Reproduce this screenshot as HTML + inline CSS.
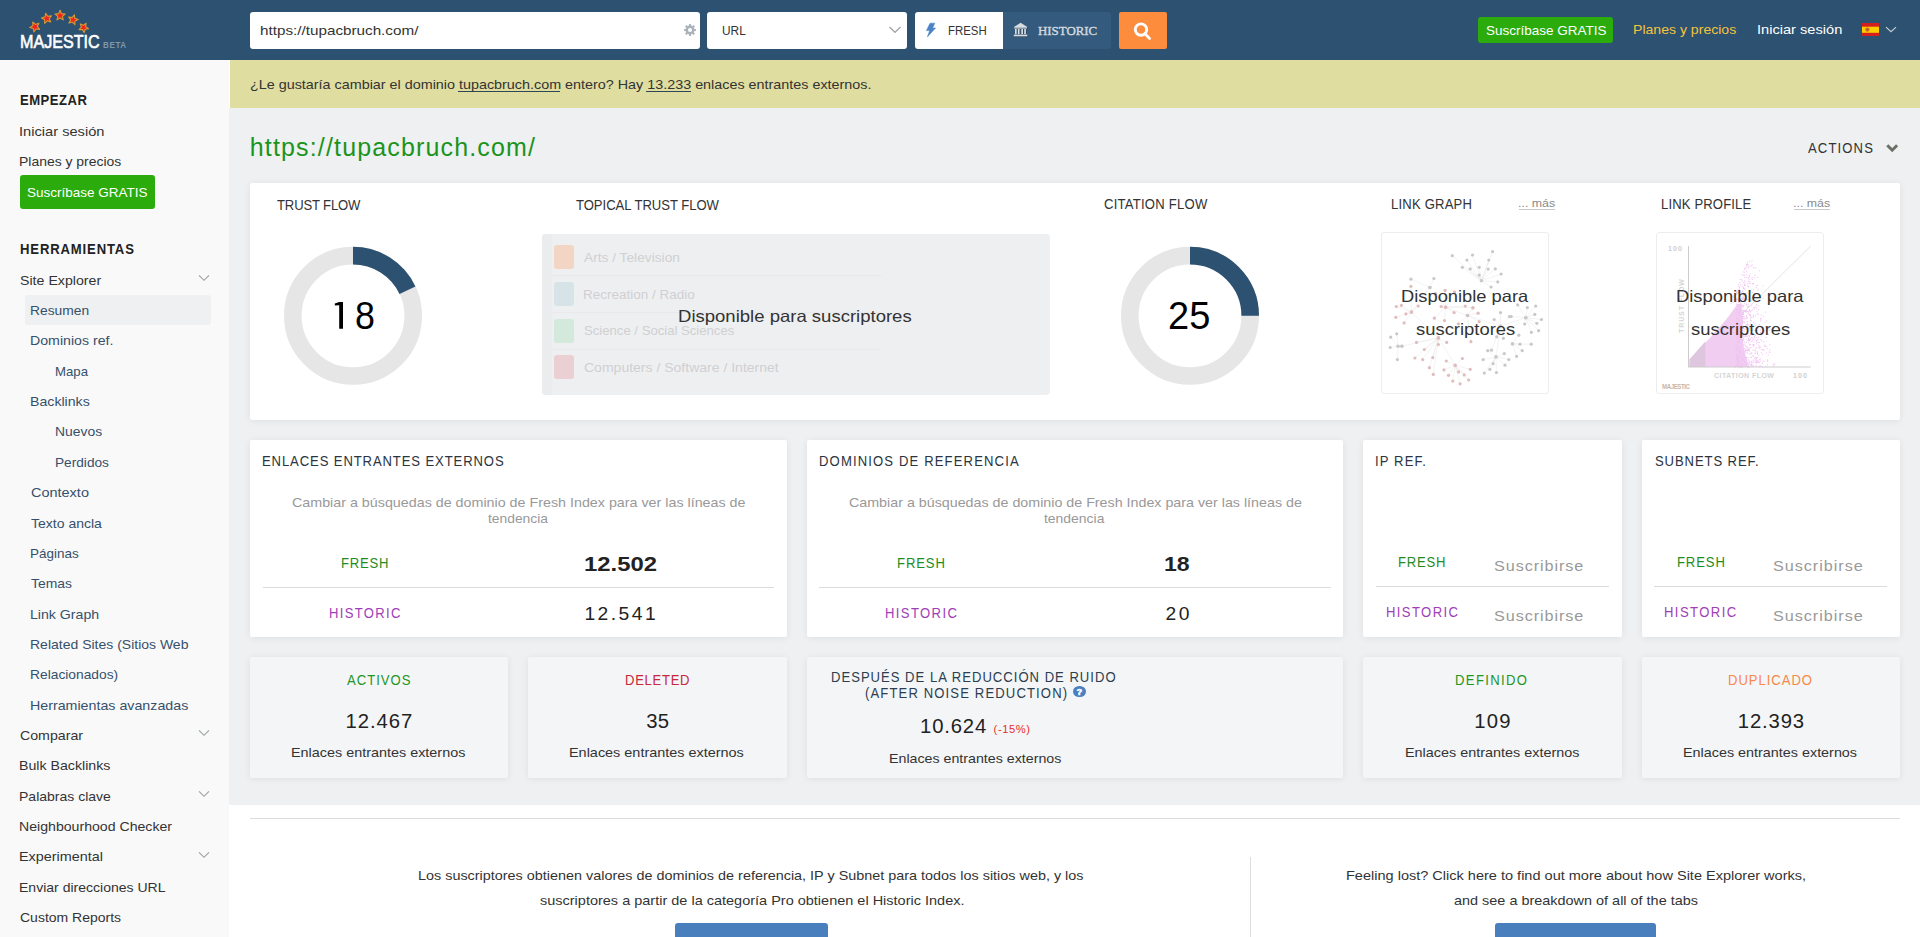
<!DOCTYPE html>
<html><head><meta charset="utf-8"><style>
html,body{margin:0;padding:0;width:1920px;height:937px;overflow:hidden;background:#fff;font-family:"Liberation Sans",sans-serif}
</style></head><body>
<div style="position:absolute;left:0px;top:0px;width:1920px;height:60px;background:#2d5170;"></div>
<div style="position:absolute;left:0px;top:60px;width:229px;height:877px;background:#f9f9f9;"></div>
<div style="position:absolute;left:230px;top:60px;width:1690px;height:48px;background:#dfdda0;"></div>
<div style="position:absolute;left:229px;top:108px;width:1691px;height:697px;background:#eef0f2;"></div>
<div style="position:absolute;left:229px;top:805px;width:1691px;height:132px;background:#ffffff;"></div>
<svg style="position:absolute;left:0;top:0" width="140" height="60"><polygon points="32.76,22.00 35.46,24.46 38.88,23.19 37.37,26.51 39.64,29.37 36.01,28.96 33.99,32.00 33.26,28.43 29.74,27.45 32.91,25.64" fill="#f0241c" stroke="#d69a32" stroke-width="1.1" stroke-linejoin="round"/><polygon points="45.70,13.32 47.77,16.32 51.39,15.85 49.17,18.75 50.74,22.05 47.30,20.83 44.64,23.34 44.73,19.69 41.53,17.95 45.03,16.90" fill="#f0241c" stroke="#d69a32" stroke-width="1.1" stroke-linejoin="round"/><polygon points="60.10,10.30 61.50,13.67 65.14,13.96 62.37,16.34 63.22,19.89 60.10,17.98 56.98,19.89 57.83,16.34 55.06,13.96 58.70,13.67" fill="#f0241c" stroke="#d69a32" stroke-width="1.1" stroke-linejoin="round"/><polygon points="74.35,14.78 74.82,18.33 78.19,19.53 74.96,21.07 74.86,24.65 72.39,22.06 68.96,23.07 70.66,19.92 68.64,16.97 72.16,17.62" fill="#f0241c" stroke="#d69a32" stroke-width="1.1" stroke-linejoin="round"/><polygon points="86.10,23.27 85.66,26.68 88.49,28.64 85.11,29.27 84.12,32.57 82.47,29.55 79.03,29.63 81.40,27.13 80.25,23.88 83.36,25.36" fill="#f0241c" stroke="#d69a32" stroke-width="1.1" stroke-linejoin="round"/></svg>
<div style="position:absolute;left:250px;top:12px;width:450px;height:37px;background:#fff;border-radius:3px"></div>
<svg style="position:absolute;left:680px;top:20px" width="20" height="20"><g fill="#aab3bc"><circle cx="10" cy="10" r="4.4"/><rect x="8.9" y="4.1" width="2.2" height="3" transform="rotate(0 10 10)"/><rect x="8.9" y="4.1" width="2.2" height="3" transform="rotate(45 10 10)"/><rect x="8.9" y="4.1" width="2.2" height="3" transform="rotate(90 10 10)"/><rect x="8.9" y="4.1" width="2.2" height="3" transform="rotate(135 10 10)"/><rect x="8.9" y="4.1" width="2.2" height="3" transform="rotate(180 10 10)"/><rect x="8.9" y="4.1" width="2.2" height="3" transform="rotate(225 10 10)"/><rect x="8.9" y="4.1" width="2.2" height="3" transform="rotate(270 10 10)"/><rect x="8.9" y="4.1" width="2.2" height="3" transform="rotate(315 10 10)"/></g><circle cx="10" cy="10" r="2" fill="#fff"/></svg>
<div style="position:absolute;left:707px;top:12px;width:200px;height:37px;background:#fff;border-radius:3px"></div>
<svg style="position:absolute;left:885px;top:22px" width="20" height="15"><polyline points="4.5,5 10,10.3 15.5,5" fill="none" stroke="#a0a4a8" stroke-width="1.2"/></svg>
<div style="position:absolute;left:915px;top:12px;width:88px;height:37px;background:#fff;border-radius:3px 0 0 3px"></div>
<div style="position:absolute;left:1003px;top:12px;width:108px;height:37px;background:#345a7d;border-radius:0 3px 3px 0"></div>
<svg style="position:absolute;left:922px;top:20px" width="18" height="20"><polygon points="8,3.2 12.8,3.2 10.6,8 13.6,8 5.4,17 7.6,10.6 4.4,10.6" fill="#4a84c6" stroke="#4a84c6" stroke-width="0.5" stroke-linejoin="round"/></svg>
<svg style="position:absolute;left:1010px;top:20px" width="20" height="20"><g fill="#1d3247" transform="translate(0.4,0.6)"><polygon points="10.6,2.8 3.8,7 17.4,7"/><rect x="4.2" y="7.2" width="12.8" height="1.4"/><rect x="5" y="9" width="1.7" height="5.2"/><rect x="7.9" y="9" width="1.7" height="5.2"/><rect x="11.3" y="9" width="1.7" height="5.2"/><rect x="14.2" y="9" width="1.7" height="5.2"/><rect x="3.8" y="14.6" width="13.6" height="1.8"/></g><g fill="#d8dde2"><polygon points="10.6,2.8 3.8,7 17.4,7"/><rect x="4.2" y="7.2" width="12.8" height="1.4"/><rect x="5" y="9" width="1.7" height="5.2"/><rect x="7.9" y="9" width="1.7" height="5.2"/><rect x="11.3" y="9" width="1.7" height="5.2"/><rect x="14.2" y="9" width="1.7" height="5.2"/><rect x="3.8" y="14.6" width="13.6" height="1.8"/></g></svg>
<div style="position:absolute;left:1119px;top:12px;width:48px;height:37px;background:#fd8c3c;border-radius:2px"></div>
<svg style="position:absolute;left:1129px;top:18px" width="28" height="28"><circle cx="12" cy="11.6" r="5.7" fill="none" stroke="#fbfcff" stroke-width="2.9"/><line x1="16" y1="15.8" x2="20.6" y2="20.4" stroke="#fbfcff" stroke-width="2.8" stroke-linecap="round"/></svg>
<div style="position:absolute;left:1478px;top:17px;width:135px;height:26px;background:#2bab0c;border-radius:3px"></div>
<svg style="position:absolute;left:1862px;top:23.2px" width="17" height="13"><rect width="17" height="13" fill="#d41f1f"/><rect y="3.7" width="17" height="6.1" fill="#ffcc00"/><circle cx="5.4" cy="6.6" r="2.1" fill="#b8502a" opacity="0.8"/></svg>
<svg style="position:absolute;left:1883px;top:24px" width="16" height="12"><polyline points="3,3.1 8,7.8 13,3.1" fill="none" stroke="#c5ccd3" stroke-width="1.2"/></svg>
<div style="position:absolute;left:20px;top:175px;width:135px;height:34px;background:#2bab0c;border-radius:3px"></div>
<div style="position:absolute;left:25px;top:295px;width:186px;height:30px;background:#eef0f2;border-radius:3px"></div>
<svg style="position:absolute;left:196px;top:272.3px" width="16" height="12"><polyline points="3,3.3 8,8.3 13,3.3" fill="none" stroke="#9aa0a6" stroke-width="1.1"/></svg>
<svg style="position:absolute;left:196px;top:727.4px" width="16" height="12"><polyline points="3,3.3 8,8.3 13,3.3" fill="none" stroke="#9aa0a6" stroke-width="1.1"/></svg>
<svg style="position:absolute;left:196px;top:788.0px" width="16" height="12"><polyline points="3,3.3 8,8.3 13,3.3" fill="none" stroke="#9aa0a6" stroke-width="1.1"/></svg>
<svg style="position:absolute;left:196px;top:848.7px" width="16" height="12"><polyline points="3,3.3 8,8.3 13,3.3" fill="none" stroke="#9aa0a6" stroke-width="1.1"/></svg>
<svg style="position:absolute;left:1884px;top:140px" width="17" height="15"><polyline points="3.3,5.3 8.2,10.2 13.1,5.3" fill="none" stroke="#6b6f66" stroke-width="3"/></svg>
<div style="position:absolute;left:250px;top:183px;width:1650px;height:237px;background:#fff;box-shadow:0 1px 7px rgba(0,0,0,0.075);border-radius:2px"></div>
<div style="position:absolute;left:1519px;top:209px;width:36.4px;height:1.2px;background:#c8c8c8;"></div>
<div style="position:absolute;left:1794px;top:209px;width:36.4px;height:1.2px;background:#c8c8c8;"></div>
<svg style="position:absolute;left:0;top:0" width="1300" height="420"><circle cx="353" cy="315.8" r="60.2" fill="none" stroke="#e6e6e6" stroke-width="17.6"/><path d="M353,255.60000000000002 A60.2,60.2 0 0 1 407.47,290.17" fill="none" stroke="#2d5170" stroke-width="17.6"/><circle cx="1190" cy="315.8" r="60.2" fill="none" stroke="#e6e6e6" stroke-width="17.6"/><path d="M1190,255.60000000000002 A60.2,60.2 0 0 1 1250.20,315.80" fill="none" stroke="#2d5170" stroke-width="17.6"/></svg>
<svg style="position:absolute;left:330px;top:298px" width="20" height="35"><polygon points="9.2,4 13,4 13,30.8 9.2,30.8 9.2,7.2 4.8,7.6 4.8,5.4" fill="#000"/></svg>
<div style="position:absolute;left:542px;top:234px;width:508px;height:161px;background:#eeeff1;border-radius:4px"></div>
<div style="position:absolute;left:542px;top:234px;width:10px;height:161px;background:#ebecee;border-radius:4px 0 0 4px"></div>
<div style="position:absolute;left:553.6px;top:245.0px;width:20.6px;height:24px;background:#f2d5c3;border-radius:3px"></div>
<div style="position:absolute;left:552px;top:275.3px;width:330px;height:1px;background:#e8e9eb;"></div>
<div style="position:absolute;left:553.6px;top:281.8px;width:20.6px;height:24px;background:#d6e4e8;border-radius:3px"></div>
<div style="position:absolute;left:552px;top:312.1px;width:330px;height:1px;background:#e8e9eb;"></div>
<div style="position:absolute;left:553.6px;top:318.6px;width:20.6px;height:24px;background:#d3e9dc;border-radius:3px"></div>
<div style="position:absolute;left:552px;top:348.9px;width:330px;height:1px;background:#e8e9eb;"></div>
<div style="position:absolute;left:553.6px;top:355.4px;width:20.6px;height:24px;background:#ebd0d3;border-radius:3px"></div>
<div style="position:absolute;left:1381px;top:232px;width:168px;height:162px;background:#fff;border:1px solid #ededed;border-radius:3px;box-sizing:border-box"></div>
<svg style="position:absolute;left:1381px;top:232px" width="168" height="162"><g stroke="#e6e6e6" stroke-width="0.5"><line x1="100.4" y1="48.7" x2="71.3" y2="23.7"/><line x1="100.4" y1="48.7" x2="85.9" y2="28.1"/><line x1="100.4" y1="48.7" x2="91.5" y2="23.0"/><line x1="100.4" y1="48.7" x2="111.6" y2="19.6"/><line x1="100.4" y1="48.7" x2="107.8" y2="28.1"/><line x1="100.4" y1="48.7" x2="81.4" y2="35.3"/><line x1="100.4" y1="48.7" x2="89.2" y2="36.9"/><line x1="100.4" y1="48.7" x2="98.2" y2="35.3"/><line x1="100.4" y1="48.7" x2="107.2" y2="37.1"/><line x1="100.4" y1="48.7" x2="114.3" y2="36.9"/><line x1="100.4" y1="48.7" x2="120.1" y2="42.0"/><line x1="100.4" y1="48.7" x2="116.8" y2="49.9"/><line x1="100.4" y1="48.7" x2="110.1" y2="55.0"/><line x1="100.4" y1="48.7" x2="98.2" y2="43.1"/><line x1="30.5" y1="80.1" x2="15.3" y2="74.5"/><line x1="30.5" y1="80.1" x2="20.4" y2="73.4"/><line x1="30.5" y1="80.1" x2="14.8" y2="85.3"/><line x1="30.5" y1="80.1" x2="23.1" y2="90.9"/><line x1="30.5" y1="80.1" x2="24.9" y2="81.9"/><line x1="30.5" y1="80.1" x2="37.2" y2="74.1"/><line x1="30.5" y1="80.1" x2="48.9" y2="55.5"/><line x1="30.5" y1="80.1" x2="29.9" y2="54.3"/><line x1="48.9" y1="55.5" x2="29.9" y2="47.2"/><line x1="48.9" y1="55.5" x2="52.9" y2="46.5"/><line x1="64.6" y1="75.2" x2="54.5" y2="61.5"/><line x1="64.6" y1="75.2" x2="64.1" y2="58.4"/><line x1="64.6" y1="75.2" x2="73.5" y2="59.9"/><line x1="64.6" y1="75.2" x2="60.1" y2="74.5"/><line x1="64.6" y1="75.2" x2="73.1" y2="80.6"/><line x1="64.6" y1="75.2" x2="53.4" y2="86.2"/><line x1="64.6" y1="75.2" x2="63.5" y2="88.6"/><line x1="64.6" y1="75.2" x2="84.3" y2="74.1"/><line x1="64.6" y1="75.2" x2="91.9" y2="75.6"/><line x1="86.5" y1="83.5" x2="97.1" y2="81.2"/><line x1="86.5" y1="83.5" x2="98.2" y2="89.7"/><line x1="86.5" y1="83.5" x2="91.9" y2="76.1"/><line x1="86.5" y1="83.5" x2="77.4" y2="91.8"/><line x1="86.5" y1="83.5" x2="89.9" y2="109.7"/><line x1="86.5" y1="83.5" x2="64.6" y2="75.2"/><line x1="57.4" y1="105.9" x2="35.5" y2="110.4"/><line x1="57.4" y1="105.9" x2="43.3" y2="117.5"/><line x1="57.4" y1="105.9" x2="33.9" y2="126.0"/><line x1="57.4" y1="105.9" x2="41.7" y2="127.6"/><line x1="57.4" y1="105.9" x2="51.8" y2="125.6"/><line x1="57.4" y1="105.9" x2="48.4" y2="135.7"/><line x1="57.4" y1="105.9" x2="52.3" y2="142.4"/><line x1="57.4" y1="105.9" x2="65.7" y2="110.4"/><line x1="57.4" y1="105.9" x2="57.4" y2="112.6"/><line x1="57.4" y1="105.9" x2="30.5" y2="80.1"/><line x1="57.4" y1="105.9" x2="20.9" y2="114.2"/><line x1="74.2" y1="133.4" x2="65.3" y2="129.0"/><line x1="74.2" y1="133.4" x2="81.4" y2="126.5"/><line x1="74.2" y1="133.4" x2="89.2" y2="137.3"/><line x1="74.2" y1="133.4" x2="63.0" y2="137.9"/><line x1="74.2" y1="133.4" x2="67.5" y2="143.3"/><line x1="74.2" y1="133.4" x2="71.8" y2="149.1"/><line x1="74.2" y1="133.4" x2="79.1" y2="151.8"/><line x1="74.2" y1="133.4" x2="87.7" y2="148.0"/><line x1="74.2" y1="133.4" x2="83.2" y2="142.9"/><line x1="74.2" y1="133.4" x2="77.6" y2="139.9"/><line x1="74.2" y1="133.4" x2="57.4" y2="105.9"/><line x1="17.1" y1="114.2" x2="9.7" y2="105.2"/><line x1="17.1" y1="114.2" x2="15.7" y2="101.8"/><line x1="17.1" y1="114.2" x2="9.2" y2="115.5"/><line x1="17.1" y1="114.2" x2="16.4" y2="127.6"/><line x1="17.1" y1="114.2" x2="20.9" y2="114.2"/><line x1="119.5" y1="94.2" x2="113.2" y2="87.5"/><line x1="119.5" y1="94.2" x2="119.5" y2="80.6"/><line x1="119.5" y1="94.2" x2="128.4" y2="84.6"/><line x1="119.5" y1="94.2" x2="122.4" y2="106.3"/><line x1="119.5" y1="94.2" x2="115.7" y2="104.8"/><line x1="119.5" y1="94.2" x2="110.5" y2="118.2"/><line x1="119.5" y1="94.2" x2="86.5" y2="83.5"/><line x1="119.5" y1="94.2" x2="144.8" y2="85.7"/><line x1="144.8" y1="85.7" x2="136.7" y2="72.9"/><line x1="144.8" y1="85.7" x2="146.4" y2="75.6"/><line x1="144.8" y1="85.7" x2="154.7" y2="74.1"/><line x1="144.8" y1="85.7" x2="153.8" y2="82.4"/><line x1="144.8" y1="85.7" x2="160.5" y2="87.5"/><line x1="144.8" y1="85.7" x2="155.8" y2="91.3"/><line x1="144.8" y1="85.7" x2="157.6" y2="98.7"/><line x1="144.8" y1="85.7" x2="150.4" y2="100.3"/><line x1="144.8" y1="85.7" x2="143.7" y2="92.0"/><line x1="144.8" y1="85.7" x2="130.2" y2="84.6"/><line x1="115.0" y1="124.9" x2="106.7" y2="118.7"/><line x1="115.0" y1="124.9" x2="123.3" y2="121.6"/><line x1="115.0" y1="124.9" x2="127.8" y2="127.6"/><line x1="115.0" y1="124.9" x2="124.0" y2="133.2"/><line x1="115.0" y1="124.9" x2="115.4" y2="140.6"/><line x1="115.0" y1="124.9" x2="108.9" y2="137.3"/><line x1="115.0" y1="124.9" x2="103.3" y2="141.1"/><line x1="115.0" y1="124.9" x2="102.2" y2="127.6"/><line x1="115.0" y1="124.9" x2="112.1" y2="131.7"/><line x1="115.0" y1="124.9" x2="119.5" y2="94.2"/><line x1="131.4" y1="111.9" x2="139.0" y2="112.2"/><line x1="131.4" y1="111.9" x2="141.2" y2="118.7"/><line x1="131.4" y1="111.9" x2="135.6" y2="124.3"/><line x1="131.4" y1="111.9" x2="150.2" y2="112.2"/><line x1="131.4" y1="111.9" x2="137.8" y2="103.2"/></g><circle cx="71.3" cy="23.7" r="1.6" fill="#c8c8c8"/><circle cx="85.9" cy="28.1" r="1.6" fill="#c8c8c8"/><circle cx="91.5" cy="23.0" r="1.6" fill="#c8c8c8"/><circle cx="111.6" cy="19.6" r="1.6" fill="#c8c8c8"/><circle cx="107.8" cy="28.1" r="1.6" fill="#c8c8c8"/><circle cx="81.4" cy="35.3" r="1.6" fill="#c8c8c8"/><circle cx="89.2" cy="36.9" r="1.6" fill="#c8c8c8"/><circle cx="98.2" cy="35.3" r="1.6" fill="#c8c8c8"/><circle cx="107.2" cy="37.1" r="1.6" fill="#c8c8c8"/><circle cx="114.3" cy="36.9" r="1.6" fill="#c8c8c8"/><circle cx="120.1" cy="42.0" r="1.6" fill="#c8c8c8"/><circle cx="116.8" cy="49.9" r="1.6" fill="#c8c8c8"/><circle cx="110.1" cy="55.0" r="1.6" fill="#c8c8c8"/><circle cx="98.2" cy="43.1" r="1.6" fill="#c8c8c8"/><circle cx="100.4" cy="48.7" r="1.8" fill="#c8c8c8"/><circle cx="15.3" cy="74.5" r="1.6" fill="#e0bcbc"/><circle cx="20.4" cy="73.4" r="1.6" fill="#e0bcbc"/><circle cx="14.8" cy="85.3" r="1.6" fill="#e0bcbc"/><circle cx="23.1" cy="90.9" r="1.6" fill="#e0bcbc"/><circle cx="24.9" cy="81.9" r="1.6" fill="#e0bcbc"/><circle cx="37.2" cy="74.1" r="1.6" fill="#e0bcbc"/><circle cx="48.9" cy="55.5" r="1.6" fill="#e0bcbc"/><circle cx="29.9" cy="54.3" r="1.6" fill="#e0bcbc"/><circle cx="30.5" cy="80.1" r="1.8" fill="#e0bcbc"/><circle cx="29.9" cy="47.2" r="1.6" fill="#c8c8c8"/><circle cx="52.9" cy="46.5" r="1.6" fill="#c8c8c8"/><circle cx="48.9" cy="55.5" r="1.8" fill="#c8c8c8"/><circle cx="54.5" cy="61.5" r="1.6" fill="#e0bcbc"/><circle cx="64.1" cy="58.4" r="1.6" fill="#e0bcbc"/><circle cx="73.5" cy="59.9" r="1.6" fill="#e0bcbc"/><circle cx="60.1" cy="74.5" r="1.6" fill="#e0bcbc"/><circle cx="73.1" cy="80.6" r="1.6" fill="#e0bcbc"/><circle cx="53.4" cy="86.2" r="1.6" fill="#e0bcbc"/><circle cx="63.5" cy="88.6" r="1.6" fill="#e0bcbc"/><circle cx="84.3" cy="74.1" r="1.6" fill="#e0bcbc"/><circle cx="91.9" cy="75.6" r="1.6" fill="#e0bcbc"/><circle cx="64.6" cy="75.2" r="1.8" fill="#e0bcbc"/><circle cx="97.1" cy="81.2" r="1.6" fill="#e0bcbc"/><circle cx="98.2" cy="89.7" r="1.6" fill="#e0bcbc"/><circle cx="91.9" cy="76.1" r="1.6" fill="#e0bcbc"/><circle cx="77.4" cy="91.8" r="1.6" fill="#e0bcbc"/><circle cx="89.9" cy="109.7" r="1.6" fill="#e0bcbc"/><circle cx="64.6" cy="75.2" r="1.6" fill="#e0bcbc"/><circle cx="86.5" cy="83.5" r="1.8" fill="#e0bcbc"/><circle cx="35.5" cy="110.4" r="1.6" fill="#e0bcbc"/><circle cx="43.3" cy="117.5" r="1.6" fill="#e0bcbc"/><circle cx="33.9" cy="126.0" r="1.6" fill="#e0bcbc"/><circle cx="41.7" cy="127.6" r="1.6" fill="#e0bcbc"/><circle cx="51.8" cy="125.6" r="1.6" fill="#e0bcbc"/><circle cx="48.4" cy="135.7" r="1.6" fill="#e0bcbc"/><circle cx="52.3" cy="142.4" r="1.6" fill="#e0bcbc"/><circle cx="65.7" cy="110.4" r="1.6" fill="#e0bcbc"/><circle cx="57.4" cy="112.6" r="1.6" fill="#e0bcbc"/><circle cx="30.5" cy="80.1" r="1.6" fill="#e0bcbc"/><circle cx="20.9" cy="114.2" r="1.6" fill="#e0bcbc"/><circle cx="57.4" cy="105.9" r="1.8" fill="#e0bcbc"/><circle cx="65.3" cy="129.0" r="1.6" fill="#e0bcbc"/><circle cx="81.4" cy="126.5" r="1.6" fill="#e0bcbc"/><circle cx="89.2" cy="137.3" r="1.6" fill="#e0bcbc"/><circle cx="63.0" cy="137.9" r="1.6" fill="#e0bcbc"/><circle cx="67.5" cy="143.3" r="1.6" fill="#e0bcbc"/><circle cx="71.8" cy="149.1" r="1.6" fill="#e0bcbc"/><circle cx="79.1" cy="151.8" r="1.6" fill="#e0bcbc"/><circle cx="87.7" cy="148.0" r="1.6" fill="#e0bcbc"/><circle cx="83.2" cy="142.9" r="1.6" fill="#e0bcbc"/><circle cx="77.6" cy="139.9" r="1.6" fill="#e0bcbc"/><circle cx="57.4" cy="105.9" r="1.6" fill="#e0bcbc"/><circle cx="74.2" cy="133.4" r="1.8" fill="#e0bcbc"/><circle cx="9.7" cy="105.2" r="1.6" fill="#c8c8c8"/><circle cx="15.7" cy="101.8" r="1.6" fill="#c8c8c8"/><circle cx="9.2" cy="115.5" r="1.6" fill="#c8c8c8"/><circle cx="16.4" cy="127.6" r="1.6" fill="#c8c8c8"/><circle cx="20.9" cy="114.2" r="1.6" fill="#c8c8c8"/><circle cx="17.1" cy="114.2" r="1.8" fill="#c8c8c8"/><circle cx="113.2" cy="87.5" r="1.6" fill="#c8c8c8"/><circle cx="119.5" cy="80.6" r="1.6" fill="#c8c8c8"/><circle cx="128.4" cy="84.6" r="1.6" fill="#c8c8c8"/><circle cx="122.4" cy="106.3" r="1.6" fill="#c8c8c8"/><circle cx="115.7" cy="104.8" r="1.6" fill="#c8c8c8"/><circle cx="110.5" cy="118.2" r="1.6" fill="#c8c8c8"/><circle cx="86.5" cy="83.5" r="1.6" fill="#c8c8c8"/><circle cx="144.8" cy="85.7" r="1.6" fill="#c8c8c8"/><circle cx="119.5" cy="94.2" r="1.8" fill="#c8c8c8"/><circle cx="136.7" cy="72.9" r="1.6" fill="#c8c8c8"/><circle cx="146.4" cy="75.6" r="1.6" fill="#c8c8c8"/><circle cx="154.7" cy="74.1" r="1.6" fill="#c8c8c8"/><circle cx="153.8" cy="82.4" r="1.6" fill="#c8c8c8"/><circle cx="160.5" cy="87.5" r="1.6" fill="#c8c8c8"/><circle cx="155.8" cy="91.3" r="1.6" fill="#c8c8c8"/><circle cx="157.6" cy="98.7" r="1.6" fill="#c8c8c8"/><circle cx="150.4" cy="100.3" r="1.6" fill="#c8c8c8"/><circle cx="143.7" cy="92.0" r="1.6" fill="#c8c8c8"/><circle cx="130.2" cy="84.6" r="1.6" fill="#c8c8c8"/><circle cx="144.8" cy="85.7" r="1.8" fill="#c8c8c8"/><circle cx="106.7" cy="118.7" r="1.6" fill="#c8c8c8"/><circle cx="123.3" cy="121.6" r="1.6" fill="#c8c8c8"/><circle cx="127.8" cy="127.6" r="1.6" fill="#c8c8c8"/><circle cx="124.0" cy="133.2" r="1.6" fill="#c8c8c8"/><circle cx="115.4" cy="140.6" r="1.6" fill="#c8c8c8"/><circle cx="108.9" cy="137.3" r="1.6" fill="#c8c8c8"/><circle cx="103.3" cy="141.1" r="1.6" fill="#c8c8c8"/><circle cx="102.2" cy="127.6" r="1.6" fill="#c8c8c8"/><circle cx="112.1" cy="131.7" r="1.6" fill="#c8c8c8"/><circle cx="119.5" cy="94.2" r="1.6" fill="#c8c8c8"/><circle cx="115.0" cy="124.9" r="1.8" fill="#c8c8c8"/><circle cx="139.0" cy="112.2" r="1.6" fill="#c8c8c8"/><circle cx="141.2" cy="118.7" r="1.6" fill="#c8c8c8"/><circle cx="135.6" cy="124.3" r="1.6" fill="#c8c8c8"/><circle cx="150.2" cy="112.2" r="1.6" fill="#c8c8c8"/><circle cx="137.8" cy="103.2" r="1.6" fill="#c8c8c8"/><circle cx="131.4" cy="111.9" r="1.8" fill="#c8c8c8"/></svg>
<div style="position:absolute;left:1656px;top:232px;width:168px;height:162px;background:#fff;border:1px solid #ededed;border-radius:3px;box-sizing:border-box"></div>
<svg style="position:absolute;left:1656px;top:232px" width="168" height="162"><line x1="32.5" y1="135.0" x2="154.7" y2="14.0" stroke="#d6d6d6" stroke-width="0.7"/><polygon points="33.5,134.9 33.5,127.5 56.7,103.1 71.4,85.9 81.2,72.5 84.9,71.2 87.3,85.9 86.1,103.1 88.5,120.2 93.4,134.9" fill="#f1cdf1"/><polygon points="33.5,134.9 33.5,127.5 49.4,109.2 49.4,134.9" fill="#dfc6df"/><rect x="102.0" y="112.6" width="1" height="1" fill="#f0c2f0"/><rect x="112.1" y="101.9" width="1" height="1" fill="#f0c2f0"/><rect x="103.3" y="93.5" width="1" height="1" fill="#f0c2f0"/><rect x="79.4" y="58.3" width="1" height="1" fill="#f0c2f0"/><rect x="98.0" y="75.4" width="1" height="1" fill="#f0c2f0"/><rect x="83.6" y="122.5" width="1" height="1" fill="#f0c2f0"/><rect x="80.2" y="91.9" width="1" height="1" fill="#f0c2f0"/><rect x="92.0" y="130.5" width="1" height="1" fill="#f0c2f0"/><rect x="98.9" y="120.5" width="1" height="1" fill="#f0c2f0"/><rect x="100.5" y="72.6" width="1" height="1" fill="#f0c2f0"/><rect x="79.9" y="103.1" width="1" height="1" fill="#f0c2f0"/><rect x="82.3" y="126.0" width="1" height="1" fill="#f0c2f0"/><rect x="91.6" y="33.7" width="1" height="1" fill="#f0c2f0"/><rect x="87.3" y="88.8" width="1" height="1" fill="#f0c2f0"/><rect x="106.0" y="130.9" width="1" height="1" fill="#f0c2f0"/><rect x="84.5" y="134.8" width="1" height="1" fill="#f0c2f0"/><rect x="99.3" y="92.7" width="1" height="1" fill="#f0c2f0"/><rect x="83.5" y="100.2" width="1" height="1" fill="#f0c2f0"/><rect x="84.9" y="98.9" width="1" height="1" fill="#f0c2f0"/><rect x="99.3" y="61.3" width="1" height="1" fill="#f0c2f0"/><rect x="89.8" y="94.6" width="1" height="1" fill="#f0c2f0"/><rect x="92.0" y="35.2" width="1" height="1" fill="#f0c2f0"/><rect x="93.1" y="104.1" width="1" height="1" fill="#f0c2f0"/><rect x="96.7" y="112.3" width="1" height="1" fill="#f0c2f0"/><rect x="82.8" y="105.7" width="1" height="1" fill="#f0c2f0"/><rect x="94.8" y="92.4" width="1" height="1" fill="#f0c2f0"/><rect x="89.1" y="113.5" width="1" height="1" fill="#f0c2f0"/><rect x="94.2" y="101.6" width="1" height="1" fill="#f0c2f0"/><rect x="89.8" y="84.2" width="1" height="1" fill="#f0c2f0"/><rect x="101.0" y="119.5" width="1" height="1" fill="#f0c2f0"/><rect x="78.8" y="134.7" width="1" height="1" fill="#f0c2f0"/><rect x="89.2" y="101.0" width="1" height="1" fill="#f0c2f0"/><rect x="92.1" y="106.8" width="1" height="1" fill="#f0c2f0"/><rect x="81.1" y="125.3" width="1" height="1" fill="#f0c2f0"/><rect x="85.7" y="77.7" width="1" height="1" fill="#f0c2f0"/><rect x="79.6" y="128.9" width="1" height="1" fill="#f0c2f0"/><rect x="85.5" y="98.2" width="1" height="1" fill="#f0c2f0"/><rect x="101.2" y="106.7" width="1" height="1" fill="#f0c2f0"/><rect x="77.5" y="67.6" width="1" height="1" fill="#f0c2f0"/><rect x="80.6" y="124.7" width="1" height="1" fill="#f0c2f0"/><rect x="100.2" y="108.9" width="1" height="1" fill="#f0c2f0"/><rect x="93.4" y="132.0" width="1" height="1" fill="#f0c2f0"/><rect x="92.2" y="49.1" width="1" height="1" fill="#f0c2f0"/><rect x="81.8" y="101.0" width="1" height="1" fill="#f0c2f0"/><rect x="90.4" y="94.3" width="1" height="1" fill="#f0c2f0"/><rect x="97.0" y="35.0" width="1" height="1" fill="#f0c2f0"/><rect x="87.5" y="78.7" width="1" height="1" fill="#f0c2f0"/><rect x="81.0" y="114.4" width="1" height="1" fill="#f0c2f0"/><rect x="103.3" y="133.7" width="1" height="1" fill="#f0c2f0"/><rect x="90.6" y="66.9" width="1" height="1" fill="#f0c2f0"/><rect x="93.8" y="101.0" width="1" height="1" fill="#f0c2f0"/><rect x="86.9" y="66.5" width="1" height="1" fill="#f0c2f0"/><rect x="88.8" y="68.9" width="1" height="1" fill="#f0c2f0"/><rect x="103.2" y="113.8" width="1" height="1" fill="#f0c2f0"/><rect x="97.3" y="112.1" width="1" height="1" fill="#f0c2f0"/><rect x="90.2" y="72.5" width="1" height="1" fill="#f0c2f0"/><rect x="99.4" y="125.1" width="1" height="1" fill="#f0c2f0"/><rect x="82.0" y="133.8" width="1" height="1" fill="#f0c2f0"/><rect x="81.1" y="120.8" width="1" height="1" fill="#f0c2f0"/><rect x="102.4" y="134.1" width="1" height="1" fill="#f0c2f0"/><rect x="81.7" y="104.3" width="1" height="1" fill="#f0c2f0"/><rect x="99.5" y="119.5" width="1" height="1" fill="#f0c2f0"/><rect x="97.1" y="83.8" width="1" height="1" fill="#f0c2f0"/><rect x="86.8" y="101.2" width="1" height="1" fill="#f0c2f0"/><rect x="113.2" y="97.6" width="1" height="1" fill="#f0c2f0"/><rect x="87.7" y="103.6" width="1" height="1" fill="#f0c2f0"/><rect x="98.3" y="76.5" width="1" height="1" fill="#f0c2f0"/><rect x="83.3" y="63.5" width="1" height="1" fill="#f0c2f0"/><rect x="98.2" y="105.1" width="1" height="1" fill="#f0c2f0"/><rect x="104.7" y="103.5" width="1" height="1" fill="#f0c2f0"/><rect x="89.2" y="117.3" width="1" height="1" fill="#f0c2f0"/><rect x="85.2" y="71.6" width="1" height="1" fill="#f0c2f0"/><rect x="85.8" y="97.3" width="1" height="1" fill="#f0c2f0"/><rect x="86.4" y="81.1" width="1" height="1" fill="#f0c2f0"/><rect x="106.8" y="117.2" width="1" height="1" fill="#f0c2f0"/><rect x="80.3" y="89.3" width="1" height="1" fill="#f0c2f0"/><rect x="85.0" y="127.2" width="1" height="1" fill="#f0c2f0"/><rect x="98.8" y="116.6" width="1" height="1" fill="#f0c2f0"/><rect x="97.4" y="35.4" width="1" height="1" fill="#f0c2f0"/><rect x="81.4" y="88.4" width="1" height="1" fill="#f0c2f0"/><rect x="100.2" y="108.2" width="1" height="1" fill="#f0c2f0"/><rect x="91.7" y="81.3" width="1" height="1" fill="#f0c2f0"/><rect x="88.8" y="52.6" width="1" height="1" fill="#f0c2f0"/><rect x="80.2" y="59.4" width="1" height="1" fill="#f0c2f0"/><rect x="86.6" y="90.2" width="1" height="1" fill="#f0c2f0"/><rect x="83.8" y="103.7" width="1" height="1" fill="#f0c2f0"/><rect x="82.2" y="86.2" width="1" height="1" fill="#f0c2f0"/><rect x="117.0" y="133.6" width="1" height="1" fill="#f0c2f0"/><rect x="92.5" y="108.0" width="1" height="1" fill="#f0c2f0"/><rect x="91.0" y="74.7" width="1" height="1" fill="#f0c2f0"/><rect x="97.1" y="112.4" width="1" height="1" fill="#f0c2f0"/><rect x="113.3" y="111.9" width="1" height="1" fill="#f0c2f0"/><rect x="89.6" y="66.4" width="1" height="1" fill="#f0c2f0"/><rect x="80.1" y="123.0" width="1" height="1" fill="#f0c2f0"/><rect x="80.8" y="86.6" width="1" height="1" fill="#f0c2f0"/><rect x="92.5" y="127.6" width="1" height="1" fill="#f0c2f0"/><rect x="85.5" y="132.9" width="1" height="1" fill="#f0c2f0"/><rect x="88.6" y="118.0" width="1" height="1" fill="#f0c2f0"/><rect x="104.8" y="120.1" width="1" height="1" fill="#f0c2f0"/><rect x="84.6" y="68.6" width="1" height="1" fill="#f0c2f0"/><rect x="88.7" y="52.8" width="1" height="1" fill="#f0c2f0"/><rect x="90.4" y="85.8" width="1" height="1" fill="#f0c2f0"/><rect x="82.3" y="103.9" width="1" height="1" fill="#f0c2f0"/><rect x="88.3" y="120.4" width="1" height="1" fill="#f0c2f0"/><rect x="83.0" y="64.3" width="1" height="1" fill="#f0c2f0"/><rect x="104.3" y="126.2" width="1" height="1" fill="#f0c2f0"/><rect x="89.2" y="78.4" width="1" height="1" fill="#f0c2f0"/><rect x="85.8" y="72.7" width="1" height="1" fill="#f0c2f0"/><rect x="88.5" y="66.4" width="1" height="1" fill="#f0c2f0"/><rect x="86.1" y="123.2" width="1" height="1" fill="#f0c2f0"/><rect x="81.3" y="99.1" width="1" height="1" fill="#f0c2f0"/><rect x="89.6" y="71.9" width="1" height="1" fill="#f0c2f0"/><rect x="86.0" y="122.6" width="1" height="1" fill="#f0c2f0"/><rect x="94.1" y="87.9" width="1" height="1" fill="#f0c2f0"/><rect x="82.6" y="107.8" width="1" height="1" fill="#f0c2f0"/><rect x="91.9" y="110.3" width="1" height="1" fill="#f0c2f0"/><rect x="88.6" y="104.3" width="1" height="1" fill="#f0c2f0"/><rect x="80.7" y="79.8" width="1" height="1" fill="#f0c2f0"/><rect x="81.9" y="51.7" width="1" height="1" fill="#f0c2f0"/><rect x="87.1" y="55.1" width="1" height="1" fill="#f0c2f0"/><rect x="89.9" y="114.1" width="1" height="1" fill="#f0c2f0"/><rect x="86.7" y="108.3" width="1" height="1" fill="#f0c2f0"/><rect x="95.5" y="28.3" width="1" height="1" fill="#f0c2f0"/><rect x="89.2" y="103.1" width="1" height="1" fill="#f0c2f0"/><rect x="87.0" y="95.9" width="1" height="1" fill="#f0c2f0"/><rect x="82.2" y="124.7" width="1" height="1" fill="#f0c2f0"/><rect x="96.8" y="129.7" width="1" height="1" fill="#f0c2f0"/><rect x="89.5" y="103.2" width="1" height="1" fill="#f0c2f0"/><rect x="84.7" y="46.9" width="1" height="1" fill="#f0c2f0"/><rect x="94.9" y="88.3" width="1" height="1" fill="#f0c2f0"/><rect x="98.8" y="82.7" width="1" height="1" fill="#f0c2f0"/><rect x="100.0" y="127.5" width="1" height="1" fill="#f0c2f0"/><rect x="89.1" y="120.6" width="1" height="1" fill="#f0c2f0"/><rect x="79.7" y="117.7" width="1" height="1" fill="#f0c2f0"/><rect x="88.4" y="118.6" width="1" height="1" fill="#f0c2f0"/><rect x="90.4" y="115.5" width="1" height="1" fill="#f0c2f0"/><rect x="86.0" y="103.0" width="1" height="1" fill="#f0c2f0"/><rect x="82.6" y="119.2" width="1" height="1" fill="#f0c2f0"/><rect x="92.1" y="127.7" width="1" height="1" fill="#f0c2f0"/><rect x="83.0" y="102.0" width="1" height="1" fill="#f0c2f0"/><rect x="80.3" y="71.5" width="1" height="1" fill="#f0c2f0"/><rect x="84.3" y="99.4" width="1" height="1" fill="#f0c2f0"/><rect x="106.0" y="134.6" width="1" height="1" fill="#f0c2f0"/><rect x="78.8" y="133.8" width="1" height="1" fill="#f0c2f0"/><rect x="87.3" y="42.6" width="1" height="1" fill="#f0c2f0"/><rect x="101.6" y="107.1" width="1" height="1" fill="#f0c2f0"/><rect x="96.7" y="84.6" width="1" height="1" fill="#f0c2f0"/><rect x="80.4" y="71.8" width="1" height="1" fill="#f0c2f0"/><rect x="83.4" y="131.2" width="1" height="1" fill="#f0c2f0"/><rect x="89.9" y="35.6" width="1" height="1" fill="#f0c2f0"/><rect x="94.7" y="124.5" width="1" height="1" fill="#f0c2f0"/><rect x="83.4" y="106.8" width="1" height="1" fill="#f0c2f0"/><rect x="87.2" y="73.4" width="1" height="1" fill="#f0c2f0"/><rect x="86.7" y="73.5" width="1" height="1" fill="#f0c2f0"/><rect x="84.2" y="79.3" width="1" height="1" fill="#f0c2f0"/><rect x="108.7" y="79.7" width="1" height="1" fill="#f0c2f0"/><rect x="89.4" y="131.2" width="1" height="1" fill="#f0c2f0"/><rect x="99.9" y="130.7" width="1" height="1" fill="#f0c2f0"/><rect x="90.5" y="119.8" width="1" height="1" fill="#f0c2f0"/><rect x="82.6" y="100.4" width="1" height="1" fill="#f0c2f0"/><rect x="110.9" y="96.3" width="1" height="1" fill="#f0c2f0"/><rect x="108.9" y="89.6" width="1" height="1" fill="#f0c2f0"/><rect x="91.3" y="108.1" width="1" height="1" fill="#f0c2f0"/><rect x="91.7" y="74.2" width="1" height="1" fill="#f0c2f0"/><rect x="84.5" y="106.3" width="1" height="1" fill="#f0c2f0"/><rect x="104.0" y="86.2" width="1" height="1" fill="#f0c2f0"/><rect x="94.3" y="101.4" width="1" height="1" fill="#f0c2f0"/><rect x="98.8" y="117.9" width="1" height="1" fill="#f0c2f0"/><rect x="85.0" y="102.3" width="1" height="1" fill="#f0c2f0"/><rect x="81.2" y="105.8" width="1" height="1" fill="#f0c2f0"/><rect x="92.2" y="79.6" width="1" height="1" fill="#f0c2f0"/><rect x="83.8" y="118.4" width="1" height="1" fill="#f0c2f0"/><rect x="109.6" y="114.0" width="1" height="1" fill="#f0c2f0"/><rect x="80.8" y="58.7" width="1" height="1" fill="#f0c2f0"/><rect x="81.9" y="57.9" width="1" height="1" fill="#f0c2f0"/><rect x="95.2" y="121.3" width="1" height="1" fill="#f0c2f0"/><rect x="83.9" y="121.1" width="1" height="1" fill="#f0c2f0"/><rect x="86.5" y="80.9" width="1" height="1" fill="#f0c2f0"/><rect x="101.0" y="127.7" width="1" height="1" fill="#f0c2f0"/><rect x="95.7" y="130.5" width="1" height="1" fill="#f0c2f0"/><rect x="109.2" y="114.2" width="1" height="1" fill="#f0c2f0"/><rect x="89.5" y="63.3" width="1" height="1" fill="#f0c2f0"/><rect x="81.3" y="90.2" width="1" height="1" fill="#f0c2f0"/><rect x="85.4" y="99.9" width="1" height="1" fill="#f0c2f0"/><rect x="79.7" y="122.2" width="1" height="1" fill="#f0c2f0"/><rect x="93.5" y="111.6" width="1" height="1" fill="#f0c2f0"/><rect x="79.9" y="97.6" width="1" height="1" fill="#f0c2f0"/><rect x="89.8" y="133.8" width="1" height="1" fill="#f0c2f0"/><rect x="93.3" y="115.3" width="1" height="1" fill="#f0c2f0"/><rect x="94.6" y="68.1" width="1" height="1" fill="#f0c2f0"/><rect x="85.8" y="127.4" width="1" height="1" fill="#f0c2f0"/><rect x="106.7" y="129.0" width="1" height="1" fill="#f0c2f0"/><rect x="92.1" y="67.3" width="1" height="1" fill="#f0c2f0"/><rect x="81.9" y="128.3" width="1" height="1" fill="#f0c2f0"/><rect x="76.9" y="64.6" width="1" height="1" fill="#f0c2f0"/><rect x="83.8" y="46.9" width="1" height="1" fill="#f0c2f0"/><rect x="92.7" y="46.8" width="1" height="1" fill="#f0c2f0"/><rect x="81.2" y="93.8" width="1" height="1" fill="#f0c2f0"/><rect x="93.1" y="94.4" width="1" height="1" fill="#f0c2f0"/><rect x="86.6" y="122.4" width="1" height="1" fill="#f0c2f0"/><rect x="90.0" y="85.3" width="1" height="1" fill="#f0c2f0"/><rect x="85.2" y="125.6" width="1" height="1" fill="#f0c2f0"/><rect x="95.2" y="133.2" width="1" height="1" fill="#f0c2f0"/><rect x="102.1" y="77.0" width="1" height="1" fill="#f0c2f0"/><rect x="79.7" y="116.5" width="1" height="1" fill="#f0c2f0"/><rect x="80.8" y="124.4" width="1" height="1" fill="#f0c2f0"/><rect x="94.1" y="79.1" width="1" height="1" fill="#f0c2f0"/><rect x="85.8" y="48.3" width="1" height="1" fill="#f0c2f0"/><rect x="80.3" y="126.2" width="1" height="1" fill="#f0c2f0"/><rect x="81.7" y="102.0" width="1" height="1" fill="#f0c2f0"/><rect x="93.2" y="29.0" width="1" height="1" fill="#f0c2f0"/><rect x="88.5" y="77.6" width="1" height="1" fill="#f0c2f0"/><rect x="93.9" y="90.5" width="1" height="1" fill="#f0c2f0"/><rect x="87.1" y="74.2" width="1" height="1" fill="#f0c2f0"/><rect x="84.3" y="94.4" width="1" height="1" fill="#f0c2f0"/><rect x="83.6" y="110.4" width="1" height="1" fill="#f0c2f0"/><rect x="93.2" y="121.9" width="1" height="1" fill="#f0c2f0"/><rect x="96.9" y="132.7" width="1" height="1" fill="#f0c2f0"/><rect x="89.9" y="109.7" width="1" height="1" fill="#f0c2f0"/><rect x="80.7" y="103.1" width="1" height="1" fill="#f0c2f0"/><rect x="97.2" y="133.5" width="1" height="1" fill="#f0c2f0"/><rect x="82.8" y="114.0" width="1" height="1" fill="#f0c2f0"/><rect x="98.6" y="129.9" width="1" height="1" fill="#f0c2f0"/><rect x="94.0" y="102.1" width="1" height="1" fill="#f0c2f0"/><rect x="85.7" y="74.6" width="1" height="1" fill="#f0c2f0"/><rect x="97.1" y="90.0" width="1" height="1" fill="#f0c2f0"/><rect x="86.5" y="65.9" width="1" height="1" fill="#f0c2f0"/><rect x="83.0" y="55.3" width="1" height="1" fill="#f0c2f0"/><rect x="84.0" y="90.9" width="1" height="1" fill="#f0c2f0"/><rect x="92.9" y="82.3" width="1" height="1" fill="#f0c2f0"/><rect x="80.4" y="131.8" width="1" height="1" fill="#f0c2f0"/><rect x="95.6" y="133.8" width="1" height="1" fill="#f0c2f0"/><rect x="81.3" y="114.9" width="1" height="1" fill="#f0c2f0"/><rect x="93.2" y="130.4" width="1" height="1" fill="#f0c2f0"/><rect x="81.1" y="116.3" width="1" height="1" fill="#f0c2f0"/><rect x="88.1" y="115.9" width="1" height="1" fill="#f0c2f0"/><rect x="94.4" y="131.5" width="1" height="1" fill="#f0c2f0"/><rect x="82.2" y="126.0" width="1" height="1" fill="#f0c2f0"/><rect x="88.1" y="84.4" width="1" height="1" fill="#f0c2f0"/><rect x="87.4" y="62.7" width="1" height="1" fill="#f0c2f0"/><rect x="99.9" y="125.7" width="1" height="1" fill="#f0c2f0"/><rect x="109.4" y="105.0" width="1" height="1" fill="#f0c2f0"/><rect x="88.0" y="36.5" width="1" height="1" fill="#f0c2f0"/><rect x="96.7" y="67.6" width="1" height="1" fill="#f0c2f0"/><rect x="77.4" y="63.3" width="1" height="1" fill="#f0c2f0"/><rect x="74.6" y="70.7" width="1" height="1" fill="#f0c2f0"/><rect x="87.1" y="101.9" width="1" height="1" fill="#f0c2f0"/><rect x="97.9" y="63.7" width="1" height="1" fill="#f0c2f0"/><rect x="84.1" y="107.1" width="1" height="1" fill="#f0c2f0"/><rect x="101.2" y="44.6" width="1" height="1" fill="#f0c2f0"/><rect x="81.3" y="92.0" width="1" height="1" fill="#f0c2f0"/><rect x="95.2" y="33.5" width="1" height="1" fill="#f0c2f0"/><rect x="88.7" y="126.3" width="1" height="1" fill="#f0c2f0"/><rect x="88.9" y="78.8" width="1" height="1" fill="#f0c2f0"/><rect x="93.7" y="41.4" width="1" height="1" fill="#f0c2f0"/><rect x="80.5" y="86.6" width="1" height="1" fill="#f0c2f0"/><rect x="94.5" y="96.6" width="1" height="1" fill="#f0c2f0"/><rect x="89.4" y="97.0" width="1" height="1" fill="#f0c2f0"/><rect x="88.2" y="96.4" width="1" height="1" fill="#f0c2f0"/><rect x="87.8" y="39.8" width="1" height="1" fill="#f0c2f0"/><rect x="102.4" y="123.2" width="1" height="1" fill="#f0c2f0"/><rect x="80.8" y="108.9" width="1" height="1" fill="#f0c2f0"/><rect x="93.2" y="48.9" width="1" height="1" fill="#f0c2f0"/><rect x="100.2" y="61.6" width="1" height="1" fill="#f0c2f0"/><rect x="110.9" y="116.1" width="1" height="1" fill="#f0c2f0"/><rect x="83.9" y="74.5" width="1" height="1" fill="#f0c2f0"/><rect x="89.8" y="83.2" width="1" height="1" fill="#f0c2f0"/><rect x="80.1" y="97.0" width="1" height="1" fill="#f0c2f0"/><rect x="98.4" y="42.8" width="1" height="1" fill="#f0c2f0"/><rect x="88.3" y="65.9" width="1" height="1" fill="#f0c2f0"/><rect x="87.3" y="60.7" width="1" height="1" fill="#f0c2f0"/><rect x="83.6" y="75.8" width="1" height="1" fill="#f0c2f0"/><rect x="93.1" y="112.6" width="1" height="1" fill="#f0c2f0"/><rect x="100.0" y="115.4" width="1" height="1" fill="#f0c2f0"/><rect x="80.3" y="105.9" width="1" height="1" fill="#f0c2f0"/><rect x="87.8" y="56.2" width="1" height="1" fill="#f0c2f0"/><rect x="83.2" y="59.3" width="1" height="1" fill="#f0c2f0"/><rect x="85.9" y="108.1" width="1" height="1" fill="#f0c2f0"/><rect x="112.6" y="119.6" width="1" height="1" fill="#f0c2f0"/><rect x="94.0" y="106.4" width="1" height="1" fill="#f0c2f0"/><rect x="89.6" y="78.1" width="1" height="1" fill="#f0c2f0"/><rect x="80.3" y="76.7" width="1" height="1" fill="#f0c2f0"/><rect x="107.7" y="117.7" width="1" height="1" fill="#f0c2f0"/><rect x="113.6" y="117.4" width="1" height="1" fill="#f0c2f0"/><rect x="104.8" y="86.2" width="1" height="1" fill="#f0c2f0"/><rect x="86.5" y="63.7" width="1" height="1" fill="#f0c2f0"/><rect x="86.3" y="134.1" width="1" height="1" fill="#f0c2f0"/><rect x="82.0" y="101.6" width="1" height="1" fill="#f0c2f0"/><rect x="83.7" y="69.7" width="1" height="1" fill="#f0c2f0"/><rect x="85.6" y="132.4" width="1" height="1" fill="#f0c2f0"/><rect x="96.4" y="51.5" width="1" height="1" fill="#f0c2f0"/><rect x="83.5" y="123.6" width="1" height="1" fill="#f0c2f0"/><rect x="94.0" y="83.6" width="1" height="1" fill="#f0c2f0"/><rect x="101.7" y="92.3" width="1" height="1" fill="#f0c2f0"/><rect x="81.6" y="132.8" width="1" height="1" fill="#f0c2f0"/><rect x="83.5" y="92.6" width="1" height="1" fill="#f0c2f0"/><rect x="99.3" y="35.3" width="1" height="1" fill="#f0c2f0"/><rect x="106.9" y="83.9" width="1" height="1" fill="#f0c2f0"/><rect x="86.2" y="110.2" width="1" height="1" fill="#f0c2f0"/><rect x="101.5" y="130.1" width="1" height="1" fill="#f0c2f0"/><rect x="100.8" y="121.3" width="1" height="1" fill="#f0c2f0"/><rect x="101.2" y="98.0" width="1" height="1" fill="#f0c2f0"/><rect x="88.7" y="112.5" width="1" height="1" fill="#f0c2f0"/><rect x="90.0" y="32.6" width="1" height="1" fill="#f0c2f0"/><rect x="107.4" y="128.6" width="1" height="1" fill="#f0c2f0"/><rect x="100.6" y="78.5" width="1" height="1" fill="#f0c2f0"/><rect x="92.3" y="74.7" width="1" height="1" fill="#f0c2f0"/><rect x="99.8" y="55.1" width="1" height="1" fill="#f0c2f0"/><rect x="81.0" y="120.8" width="1" height="1" fill="#f0c2f0"/><rect x="81.0" y="96.8" width="1" height="1" fill="#f0c2f0"/><rect x="100.9" y="53.2" width="1" height="1" fill="#f0c2f0"/><rect x="91.0" y="118.3" width="1" height="1" fill="#f0c2f0"/><rect x="83.0" y="89.1" width="1" height="1" fill="#f0c2f0"/><rect x="97.4" y="109.9" width="1" height="1" fill="#f0c2f0"/><rect x="88.2" y="36.5" width="1" height="1" fill="#f0c2f0"/><rect x="104.1" y="87.5" width="1" height="1" fill="#f0c2f0"/><rect x="91.8" y="95.9" width="1" height="1" fill="#f0c2f0"/><rect x="91.3" y="120.9" width="1" height="1" fill="#f0c2f0"/><rect x="94.0" y="58.2" width="1" height="1" fill="#f0c2f0"/><rect x="90.3" y="91.9" width="1" height="1" fill="#f0c2f0"/><rect x="91.1" y="100.8" width="1" height="1" fill="#f0c2f0"/><rect x="80.0" y="67.3" width="1" height="1" fill="#f0c2f0"/><rect x="85.3" y="134.5" width="1" height="1" fill="#f0c2f0"/><rect x="95.2" y="46.3" width="1" height="1" fill="#f0c2f0"/><rect x="102.8" y="38.3" width="1" height="1" fill="#f0c2f0"/><rect x="82.5" y="128.8" width="1" height="1" fill="#f0c2f0"/><rect x="84.4" y="83.7" width="1" height="1" fill="#f0c2f0"/><rect x="88.5" y="110.4" width="1" height="1" fill="#f0c2f0"/><rect x="93.6" y="82.3" width="1" height="1" fill="#f0c2f0"/><rect x="80.5" y="91.5" width="1" height="1" fill="#f0c2f0"/><rect x="93.5" y="106.8" width="1" height="1" fill="#f0c2f0"/><rect x="96.1" y="47.1" width="1" height="1" fill="#f0c2f0"/><rect x="84.2" y="75.4" width="1" height="1" fill="#f0c2f0"/><rect x="84.2" y="116.5" width="1" height="1" fill="#f0c2f0"/><rect x="93.3" y="129.6" width="1" height="1" fill="#f0c2f0"/><rect x="83.3" y="128.3" width="1" height="1" fill="#f0c2f0"/><rect x="94.4" y="115.2" width="1" height="1" fill="#f0c2f0"/><rect x="98.5" y="121.3" width="1" height="1" fill="#f0c2f0"/><rect x="83.0" y="86.6" width="1" height="1" fill="#f0c2f0"/><rect x="80.9" y="77.8" width="1" height="1" fill="#f0c2f0"/><rect x="86.3" y="89.7" width="1" height="1" fill="#f0c2f0"/><rect x="75.3" y="68.7" width="1" height="1" fill="#f0c2f0"/><rect x="85.4" y="66.1" width="1" height="1" fill="#f0c2f0"/><rect x="86.4" y="103.9" width="1" height="1" fill="#f0c2f0"/><rect x="85.0" y="94.2" width="1" height="1" fill="#f0c2f0"/><rect x="79.7" y="93.6" width="1" height="1" fill="#f0c2f0"/><rect x="104.2" y="128.5" width="1" height="1" fill="#f0c2f0"/><rect x="85.1" y="105.0" width="1" height="1" fill="#f0c2f0"/><rect x="105.4" y="99.8" width="1" height="1" fill="#f0c2f0"/><rect x="88.4" y="116.2" width="1" height="1" fill="#f0c2f0"/><rect x="90.8" y="85.3" width="1" height="1" fill="#f0c2f0"/><rect x="91.5" y="100.3" width="1" height="1" fill="#f0c2f0"/><rect x="85.8" y="97.7" width="1" height="1" fill="#f0c2f0"/><rect x="92.4" y="45.0" width="1" height="1" fill="#f0c2f0"/><rect x="101.5" y="95.7" width="1" height="1" fill="#f0c2f0"/><rect x="87.1" y="106.1" width="1" height="1" fill="#f0c2f0"/><rect x="94.8" y="132.4" width="1" height="1" fill="#f0c2f0"/><rect x="99.6" y="128.5" width="1" height="1" fill="#f0c2f0"/><rect x="107.3" y="109.0" width="1" height="1" fill="#f0c2f0"/><rect x="97.6" y="61.7" width="1" height="1" fill="#f0c2f0"/><rect x="82.3" y="77.0" width="1" height="1" fill="#f0c2f0"/><rect x="95.9" y="60.0" width="1" height="1" fill="#f0c2f0"/><rect x="82.1" y="92.6" width="1" height="1" fill="#f0c2f0"/><rect x="81.5" y="94.6" width="1" height="1" fill="#f0c2f0"/><rect x="85.6" y="100.2" width="1" height="1" fill="#f0c2f0"/><rect x="98.4" y="45.6" width="1" height="1" fill="#f0c2f0"/><rect x="82.8" y="129.9" width="1" height="1" fill="#f0c2f0"/><rect x="86.4" y="127.6" width="1" height="1" fill="#f0c2f0"/><rect x="95.1" y="85.1" width="1" height="1" fill="#f0c2f0"/><rect x="91.8" y="45.8" width="1" height="1" fill="#f0c2f0"/><rect x="100.5" y="53.0" width="1" height="1" fill="#f0c2f0"/><rect x="84.0" y="91.8" width="1" height="1" fill="#f0c2f0"/><rect x="86.8" y="60.5" width="1" height="1" fill="#f0c2f0"/><rect x="91.8" y="79.0" width="1" height="1" fill="#f0c2f0"/><rect x="84.1" y="104.1" width="1" height="1" fill="#f0c2f0"/><rect x="111.1" y="132.4" width="1" height="1" fill="#f0c2f0"/><rect x="98.6" y="61.9" width="1" height="1" fill="#f0c2f0"/><rect x="95.4" y="132.7" width="1" height="1" fill="#f0c2f0"/><rect x="96.6" y="114.5" width="1" height="1" fill="#f0c2f0"/><rect x="102.6" y="129.8" width="1" height="1" fill="#f0c2f0"/><rect x="99.5" y="105.2" width="1" height="1" fill="#f0c2f0"/><rect x="89.8" y="63.1" width="1" height="1" fill="#f0c2f0"/><rect x="81.6" y="83.2" width="1" height="1" fill="#f0c2f0"/><rect x="87.2" y="50.0" width="1" height="1" fill="#f0c2f0"/><rect x="90.2" y="117.3" width="1" height="1" fill="#f0c2f0"/><rect x="92.1" y="54.4" width="1" height="1" fill="#f0c2f0"/><rect x="113.5" y="119.8" width="1" height="1" fill="#f0c2f0"/><rect x="78.4" y="61.5" width="1" height="1" fill="#f0c2f0"/><rect x="91.3" y="50.9" width="1" height="1" fill="#f0c2f0"/><rect x="80.1" y="133.2" width="1" height="1" fill="#f0c2f0"/><rect x="108.2" y="98.5" width="1" height="1" fill="#f0c2f0"/><rect x="88.7" y="119.0" width="1" height="1" fill="#f0c2f0"/><rect x="86.2" y="61.7" width="1" height="1" fill="#f0c2f0"/><rect x="93.5" y="33.8" width="1" height="1" fill="#f0c2f0"/><rect x="110.6" y="129.0" width="1" height="1" fill="#f0c2f0"/><rect x="98.6" y="103.2" width="1" height="1" fill="#f0c2f0"/><rect x="91.2" y="114.7" width="1" height="1" fill="#f0c2f0"/><rect x="89.5" y="79.9" width="1" height="1" fill="#f0c2f0"/><rect x="102.2" y="73.5" width="1" height="1" fill="#f0c2f0"/><rect x="89.6" y="124.8" width="1" height="1" fill="#f0c2f0"/><rect x="79.5" y="112.7" width="1" height="1" fill="#f0c2f0"/><rect x="85.2" y="73.7" width="1" height="1" fill="#f0c2f0"/><rect x="97.8" y="104.1" width="1" height="1" fill="#f0c2f0"/><rect x="86.5" y="113.2" width="1" height="1" fill="#f0c2f0"/><rect x="82.2" y="134.8" width="1" height="1" fill="#f0c2f0"/><rect x="88.5" y="56.8" width="1" height="1" fill="#f0c2f0"/><rect x="104.2" y="107.0" width="1" height="1" fill="#f0c2f0"/><rect x="93.3" y="50.7" width="1" height="1" fill="#f0c2f0"/><rect x="84.5" y="59.9" width="1" height="1" fill="#f0c2f0"/><rect x="91.5" y="71.6" width="1" height="1" fill="#f0c2f0"/><rect x="99.8" y="71.7" width="1" height="1" fill="#f0c2f0"/><rect x="80.0" y="107.1" width="1" height="1" fill="#f0c2f0"/><rect x="109.7" y="98.2" width="1" height="1" fill="#f0c2f0"/><rect x="81.8" y="129.6" width="1" height="1" fill="#f0c2f0"/><rect x="87.3" y="107.4" width="1" height="1" fill="#f0c2f0"/><rect x="78.1" y="67.0" width="1" height="1" fill="#f0c2f0"/><rect x="96.5" y="45.0" width="1" height="1" fill="#f0c2f0"/><rect x="80.6" y="89.9" width="1" height="1" fill="#f0c2f0"/><rect x="101.3" y="81.8" width="1" height="1" fill="#f0c2f0"/><rect x="87.9" y="90.1" width="1" height="1" fill="#f0c2f0"/><rect x="86.8" y="107.4" width="1" height="1" fill="#f0c2f0"/><rect x="82.2" y="97.0" width="1" height="1" fill="#f0c2f0"/><rect x="83.3" y="54.3" width="1" height="1" fill="#f0c2f0"/><rect x="90.6" y="97.3" width="1" height="1" fill="#f0c2f0"/><rect x="93.0" y="96.1" width="1" height="1" fill="#f0c2f0"/><rect x="82.8" y="80.1" width="1" height="1" fill="#f0c2f0"/><rect x="80.7" y="95.5" width="1" height="1" fill="#f0c2f0"/><rect x="91.4" y="89.5" width="1" height="1" fill="#f0c2f0"/><rect x="91.2" y="117.5" width="1" height="1" fill="#f0c2f0"/><rect x="79.8" y="133.4" width="1" height="1" fill="#f0c2f0"/><rect x="86.9" y="84.0" width="1" height="1" fill="#f0c2f0"/><rect x="83.7" y="78.3" width="1" height="1" fill="#f0c2f0"/><rect x="90.0" y="71.6" width="1" height="1" fill="#f0c2f0"/><rect x="97.3" y="92.8" width="1" height="1" fill="#f0c2f0"/><rect x="94.3" y="120.8" width="1" height="1" fill="#f0c2f0"/><rect x="89.8" y="103.5" width="1" height="1" fill="#f0c2f0"/><rect x="88.1" y="86.4" width="1" height="1" fill="#f0c2f0"/><rect x="84.9" y="72.9" width="1" height="1" fill="#f0c2f0"/><rect x="83.1" y="83.0" width="1" height="1" fill="#f0c2f0"/><rect x="96.5" y="112.3" width="1" height="1" fill="#f0c2f0"/><rect x="98.2" y="128.7" width="1" height="1" fill="#f0c2f0"/><rect x="85.1" y="60.4" width="1" height="1" fill="#f0c2f0"/><rect x="106.2" y="121.8" width="1" height="1" fill="#f0c2f0"/><rect x="83.4" y="132.6" width="1" height="1" fill="#f0c2f0"/><rect x="90.6" y="91.7" width="1" height="1" fill="#f0c2f0"/><rect x="82.9" y="105.1" width="1" height="1" fill="#f0c2f0"/><rect x="86.8" y="81.9" width="1" height="1" fill="#f0c2f0"/><rect x="80.9" y="88.6" width="1" height="1" fill="#f0c2f0"/><rect x="89.4" y="131.5" width="1" height="1" fill="#f0c2f0"/><rect x="95.7" y="98.0" width="1" height="1" fill="#f0c2f0"/><rect x="87.7" y="127.6" width="1" height="1" fill="#f0c2f0"/><rect x="86.2" y="112.2" width="1" height="1" fill="#f0c2f0"/><rect x="97.3" y="75.2" width="1" height="1" fill="#f0c2f0"/><rect x="92.9" y="78.2" width="1" height="1" fill="#f0c2f0"/><rect x="89.1" y="86.4" width="1" height="1" fill="#f0c2f0"/><rect x="82.9" y="68.3" width="1" height="1" fill="#f0c2f0"/><rect x="87.9" y="122.2" width="1" height="1" fill="#f0c2f0"/><rect x="80.3" y="92.9" width="1" height="1" fill="#f0c2f0"/><rect x="80.8" y="110.0" width="1" height="1" fill="#f0c2f0"/><rect x="90.4" y="125.0" width="1" height="1" fill="#f0c2f0"/><rect x="93.2" y="107.8" width="1" height="1" fill="#f0c2f0"/><rect x="96.0" y="108.3" width="1" height="1" fill="#f0c2f0"/><rect x="92.5" y="117.1" width="1" height="1" fill="#f0c2f0"/><rect x="87.0" y="102.4" width="1" height="1" fill="#f0c2f0"/><rect x="89.2" y="126.1" width="1" height="1" fill="#f0c2f0"/><rect x="91.1" y="32.3" width="1" height="1" fill="#f0c2f0"/><rect x="78.4" y="67.4" width="1" height="1" fill="#f0c2f0"/><rect x="95.1" y="105.0" width="1" height="1" fill="#f0c2f0"/><rect x="92.9" y="129.6" width="1" height="1" fill="#f0c2f0"/><rect x="87.0" y="79.4" width="1" height="1" fill="#f0c2f0"/><rect x="83.5" y="95.4" width="1" height="1" fill="#f0c2f0"/><rect x="91.6" y="81.1" width="1" height="1" fill="#f0c2f0"/><rect x="82.1" y="86.2" width="1" height="1" fill="#f0c2f0"/><rect x="86.3" y="126.0" width="1" height="1" fill="#f0c2f0"/><rect x="92.7" y="107.0" width="1" height="1" fill="#f0c2f0"/><rect x="86.8" y="95.1" width="1" height="1" fill="#f0c2f0"/><rect x="98.3" y="97.7" width="1" height="1" fill="#f0c2f0"/><rect x="90.1" y="44.8" width="1" height="1" fill="#f0c2f0"/><rect x="94.0" y="100.9" width="1" height="1" fill="#f0c2f0"/><rect x="81.8" y="57.2" width="1" height="1" fill="#f0c2f0"/><rect x="79.5" y="134.1" width="1" height="1" fill="#f0c2f0"/><rect x="91.1" y="29.8" width="1" height="1" fill="#f0c2f0"/><rect x="84.7" y="134.6" width="1" height="1" fill="#f0c2f0"/><rect x="83.4" y="62.6" width="1" height="1" fill="#f0c2f0"/><rect x="82.7" y="117.1" width="1" height="1" fill="#f0c2f0"/><rect x="104.1" y="99.9" width="1" height="1" fill="#f0c2f0"/><rect x="87.6" y="112.5" width="1" height="1" fill="#f0c2f0"/><rect x="106.8" y="65.9" width="1" height="1" fill="#f0c2f0"/><rect x="109.6" y="94.9" width="1" height="1" fill="#f0c2f0"/><rect x="86.7" y="102.4" width="1" height="1" fill="#f0c2f0"/><rect x="99.7" y="129.6" width="1" height="1" fill="#f0c2f0"/><rect x="81.5" y="125.5" width="1" height="1" fill="#f0c2f0"/><rect x="88.5" y="68.2" width="1" height="1" fill="#f0c2f0"/><rect x="93.0" y="43.4" width="1" height="1" fill="#f0c2f0"/><rect x="98.6" y="102.8" width="1" height="1" fill="#f0c2f0"/><rect x="83.0" y="56.7" width="1" height="1" fill="#f0c2f0"/><rect x="90.1" y="38.8" width="1" height="1" fill="#f0c2f0"/><rect x="81.3" y="60.1" width="1" height="1" fill="#f0c2f0"/><rect x="80.1" y="126.5" width="1" height="1" fill="#f0c2f0"/><rect x="86.5" y="82.0" width="1" height="1" fill="#f0c2f0"/><rect x="83.1" y="118.4" width="1" height="1" fill="#f0c2f0"/><rect x="96.6" y="123.4" width="1" height="1" fill="#f0c2f0"/><rect x="96.9" y="50.9" width="1" height="1" fill="#f0c2f0"/><rect x="79.9" y="59.9" width="1" height="1" fill="#f0c2f0"/><rect x="83.3" y="71.8" width="1" height="1" fill="#f0c2f0"/><rect x="79.6" y="114.7" width="1" height="1" fill="#f0c2f0"/><rect x="97.3" y="113.2" width="1" height="1" fill="#f0c2f0"/><rect x="93.0" y="94.9" width="1" height="1" fill="#f0c2f0"/><rect x="98.2" y="125.8" width="1" height="1" fill="#f0c2f0"/><rect x="106.4" y="53.5" width="1" height="1" fill="#f0c2f0"/><rect x="86.8" y="79.4" width="1" height="1" fill="#f0c2f0"/><rect x="83.5" y="110.6" width="1" height="1" fill="#f0c2f0"/><rect x="79.8" y="68.6" width="1" height="1" fill="#f0c2f0"/><rect x="85.8" y="125.0" width="1" height="1" fill="#f0c2f0"/><rect x="83.2" y="120.7" width="1" height="1" fill="#f0c2f0"/><rect x="94.1" y="79.4" width="1" height="1" fill="#f0c2f0"/><rect x="82.6" y="67.9" width="1" height="1" fill="#f0c2f0"/><rect x="94.7" y="129.2" width="1" height="1" fill="#f0c2f0"/><rect x="80.9" y="133.2" width="1" height="1" fill="#f0c2f0"/><rect x="94.2" y="94.3" width="1" height="1" fill="#f0c2f0"/><rect x="96.5" y="117.3" width="1" height="1" fill="#f0c2f0"/><rect x="87.1" y="80.4" width="1" height="1" fill="#f0c2f0"/><rect x="118.2" y="131.5" width="1" height="1" fill="#f0c2f0"/><rect x="94.5" y="95.0" width="1" height="1" fill="#f0c2f0"/><rect x="96.9" y="69.9" width="1" height="1" fill="#f0c2f0"/><rect x="80.9" y="128.6" width="1" height="1" fill="#f0c2f0"/><rect x="87.5" y="118.9" width="1" height="1" fill="#f0c2f0"/><rect x="92.8" y="64.7" width="1" height="1" fill="#f0c2f0"/><rect x="81.0" y="66.7" width="1" height="1" fill="#f0c2f0"/><rect x="80.6" y="85.7" width="1" height="1" fill="#f0c2f0"/><rect x="92.4" y="92.6" width="1" height="1" fill="#f0c2f0"/><rect x="97.1" y="57.4" width="1" height="1" fill="#f0c2f0"/><rect x="95.1" y="132.2" width="1" height="1" fill="#f0c2f0"/><rect x="109.3" y="94.3" width="1" height="1" fill="#f0c2f0"/><rect x="83.3" y="124.7" width="1" height="1" fill="#f0c2f0"/><rect x="84.5" y="119.1" width="1" height="1" fill="#f0c2f0"/><rect x="91.3" y="92.7" width="1" height="1" fill="#f0c2f0"/><rect x="101.0" y="121.8" width="1" height="1" fill="#f0c2f0"/><rect x="82.8" y="65.9" width="1" height="1" fill="#f0c2f0"/><rect x="85.2" y="107.3" width="1" height="1" fill="#f0c2f0"/><rect x="81.3" y="72.6" width="1" height="1" fill="#f0c2f0"/><rect x="118.1" y="132.3" width="1" height="1" fill="#f0c2f0"/><rect x="99.8" y="129.9" width="1" height="1" fill="#f0c2f0"/><rect x="78.4" y="69.4" width="1" height="1" fill="#f0c2f0"/><rect x="87.7" y="66.7" width="1" height="1" fill="#f0c2f0"/><rect x="84.5" y="120.1" width="1" height="1" fill="#f0c2f0"/><rect x="82.3" y="133.0" width="1" height="1" fill="#f0c2f0"/><rect x="81.5" y="82.5" width="1" height="1" fill="#f0c2f0"/><rect x="86.5" y="77.8" width="1" height="1" fill="#f0c2f0"/><rect x="95.4" y="128.4" width="1" height="1" fill="#f0c2f0"/><rect x="97.4" y="118.1" width="1" height="1" fill="#f0c2f0"/><rect x="80.9" y="116.4" width="1" height="1" fill="#f0c2f0"/><rect x="83.0" y="91.6" width="1" height="1" fill="#f0c2f0"/><rect x="81.7" y="99.1" width="1" height="1" fill="#f0c2f0"/><rect x="91.7" y="115.8" width="1" height="1" fill="#f0c2f0"/><rect x="102.9" y="130.1" width="1" height="1" fill="#f0c2f0"/><rect x="94.9" y="125.0" width="1" height="1" fill="#f0c2f0"/><rect x="87.4" y="78.2" width="1" height="1" fill="#f0c2f0"/><rect x="99.8" y="101.6" width="1" height="1" fill="#f0c2f0"/><rect x="92.4" y="117.4" width="1" height="1" fill="#f0c2f0"/><rect x="88.3" y="101.0" width="1" height="1" fill="#f0c2f0"/><rect x="81.8" y="110.1" width="1" height="1" fill="#f0c2f0"/><rect x="82.4" y="117.6" width="1" height="1" fill="#f0c2f0"/><rect x="76.7" y="69.9" width="1" height="1" fill="#f0c2f0"/><rect x="83.6" y="134.0" width="1" height="1" fill="#f0c2f0"/><rect x="85.6" y="90.0" width="1" height="1" fill="#f0c2f0"/><rect x="83.5" y="81.3" width="1" height="1" fill="#f0c2f0"/><rect x="99.3" y="74.6" width="1" height="1" fill="#f0c2f0"/><rect x="84.4" y="63.7" width="1" height="1" fill="#f0c2f0"/><rect x="88.1" y="130.6" width="1" height="1" fill="#f0c2f0"/><rect x="85.3" y="104.8" width="1" height="1" fill="#f0c2f0"/><rect x="96.8" y="82.7" width="1" height="1" fill="#f0c2f0"/><rect x="111.0" y="127.5" width="1" height="1" fill="#f0c2f0"/><rect x="85.6" y="42.2" width="1" height="1" fill="#f0c2f0"/><rect x="89.2" y="34.8" width="1" height="1" fill="#f0c2f0"/><rect x="93.7" y="103.2" width="1" height="1" fill="#f0c2f0"/><rect x="90.7" y="92.5" width="1" height="1" fill="#f0c2f0"/><rect x="80.0" y="84.6" width="1" height="1" fill="#f0c2f0"/><rect x="79.8" y="94.6" width="1" height="1" fill="#f0c2f0"/><rect x="101.2" y="125.0" width="1" height="1" fill="#f0c2f0"/><rect x="93.7" y="85.3" width="1" height="1" fill="#f0c2f0"/><rect x="81.9" y="73.6" width="1" height="1" fill="#f0c2f0"/><rect x="87.0" y="55.8" width="1" height="1" fill="#f0c2f0"/><rect x="102.3" y="128.5" width="1" height="1" fill="#f0c2f0"/><rect x="101.8" y="57.4" width="1" height="1" fill="#f0c2f0"/><rect x="90.2" y="126.7" width="1" height="1" fill="#f0c2f0"/><rect x="88.5" y="49.6" width="1" height="1" fill="#f0c2f0"/><rect x="94.4" y="87.7" width="1" height="1" fill="#f0c2f0"/><rect x="103.9" y="114.8" width="1" height="1" fill="#f0c2f0"/><rect x="82.5" y="108.7" width="1" height="1" fill="#f0c2f0"/><rect x="104.2" y="97.6" width="1" height="1" fill="#f0c2f0"/><rect x="82.4" y="118.9" width="1" height="1" fill="#f0c2f0"/><rect x="90.4" y="100.4" width="1" height="1" fill="#f0c2f0"/><rect x="84.3" y="65.8" width="1" height="1" fill="#f0c2f0"/><rect x="86.1" y="59.2" width="1" height="1" fill="#f0c2f0"/><rect x="91.5" y="134.6" width="1" height="1" fill="#f0c2f0"/><rect x="102.7" y="92.1" width="1" height="1" fill="#f0c2f0"/><rect x="91.9" y="117.6" width="1" height="1" fill="#f0c2f0"/><rect x="86.1" y="128.2" width="1" height="1" fill="#f0c2f0"/><rect x="102.8" y="110.2" width="1" height="1" fill="#f0c2f0"/><rect x="84.5" y="104.5" width="1" height="1" fill="#f0c2f0"/><rect x="90.5" y="78.9" width="1" height="1" fill="#f0c2f0"/><rect x="90.7" y="96.1" width="1" height="1" fill="#f0c2f0"/><rect x="90.7" y="60.5" width="1" height="1" fill="#f0c2f0"/><rect x="85.3" y="93.9" width="1" height="1" fill="#f0c2f0"/><rect x="101.5" y="109.8" width="1" height="1" fill="#f0c2f0"/><rect x="110.4" y="95.7" width="1" height="1" fill="#f0c2f0"/><rect x="105.0" y="108.2" width="1" height="1" fill="#f0c2f0"/><rect x="87.0" y="65.5" width="1" height="1" fill="#f0c2f0"/><rect x="82.2" y="53.9" width="1" height="1" fill="#f0c2f0"/><rect x="86.3" y="92.5" width="1" height="1" fill="#f0c2f0"/><rect x="82.9" y="118.5" width="1" height="1" fill="#f0c2f0"/><rect x="85.0" y="61.2" width="1" height="1" fill="#f0c2f0"/><rect x="94.0" y="87.6" width="1" height="1" fill="#f0c2f0"/><rect x="86.1" y="95.8" width="1" height="1" fill="#f0c2f0"/><rect x="92.1" y="53.8" width="1" height="1" fill="#f0c2f0"/><rect x="86.0" y="66.9" width="1" height="1" fill="#f0c2f0"/><rect x="79.9" y="125.9" width="1" height="1" fill="#f0c2f0"/><rect x="83.4" y="50.0" width="1" height="1" fill="#f0c2f0"/><rect x="81.2" y="123.8" width="1" height="1" fill="#f0c2f0"/><rect x="88.4" y="70.8" width="1" height="1" fill="#f0c2f0"/><rect x="85.7" y="65.6" width="1" height="1" fill="#f0c2f0"/><rect x="81.9" y="66.2" width="1" height="1" fill="#f0c2f0"/><rect x="94.9" y="97.1" width="1" height="1" fill="#f0c2f0"/><rect x="81.6" y="80.3" width="1" height="1" fill="#f0c2f0"/><rect x="90.4" y="125.2" width="1" height="1" fill="#f0c2f0"/><rect x="84.2" y="114.8" width="1" height="1" fill="#f0c2f0"/><rect x="98.7" y="91.4" width="1" height="1" fill="#f0c2f0"/><rect x="95.9" y="76.9" width="1" height="1" fill="#f0c2f0"/><rect x="93.6" y="82.3" width="1" height="1" fill="#f0c2f0"/><rect x="99.3" y="98.9" width="1" height="1" fill="#f0c2f0"/><rect x="100.0" y="110.6" width="1" height="1" fill="#f0c2f0"/><rect x="105.4" y="117.1" width="1" height="1" fill="#f0c2f0"/><rect x="86.6" y="120.5" width="1" height="1" fill="#f0c2f0"/><rect x="81.8" y="88.2" width="1" height="1" fill="#f0c2f0"/><rect x="87.8" y="53.3" width="1" height="1" fill="#f0c2f0"/><rect x="85.6" y="133.3" width="1" height="1" fill="#f0c2f0"/><rect x="80.5" y="106.8" width="1" height="1" fill="#f0c2f0"/><rect x="81.7" y="69.9" width="1" height="1" fill="#f0c2f0"/><rect x="92.7" y="108.4" width="1" height="1" fill="#f0c2f0"/><rect x="91.5" y="32.4" width="1" height="1" fill="#f0c2f0"/><rect x="102.8" y="115.4" width="1" height="1" fill="#f0c2f0"/><rect x="110.4" y="88.4" width="1" height="1" fill="#f0c2f0"/><rect x="85.6" y="80.4" width="1" height="1" fill="#f0c2f0"/><rect x="94.1" y="82.8" width="1" height="1" fill="#f0c2f0"/><rect x="96.7" y="127.6" width="1" height="1" fill="#f0c2f0"/><rect x="90.8" y="104.0" width="1" height="1" fill="#f0c2f0"/><rect x="85.6" y="52.1" width="1" height="1" fill="#f0c2f0"/><rect x="80.2" y="116.7" width="1" height="1" fill="#f0c2f0"/><rect x="111.3" y="127.8" width="1" height="1" fill="#f0c2f0"/><rect x="88.3" y="109.7" width="1" height="1" fill="#f0c2f0"/><rect x="92.8" y="117.7" width="1" height="1" fill="#f0c2f0"/><rect x="92.7" y="103.1" width="1" height="1" fill="#f0c2f0"/><rect x="80.1" y="98.0" width="1" height="1" fill="#f0c2f0"/><rect x="108.5" y="112.6" width="1" height="1" fill="#f0c2f0"/><rect x="89.6" y="42.5" width="1" height="1" fill="#f0c2f0"/><rect x="85.0" y="98.7" width="1" height="1" fill="#f0c2f0"/><rect x="92.5" y="68.8" width="1" height="1" fill="#f0c2f0"/><rect x="83.1" y="121.1" width="1" height="1" fill="#f0c2f0"/><rect x="95.6" y="95.9" width="1" height="1" fill="#f0c2f0"/><rect x="90.4" y="78.9" width="1" height="1" fill="#f0c2f0"/><rect x="95.3" y="129.6" width="1" height="1" fill="#f0c2f0"/><rect x="90.2" y="118.0" width="1" height="1" fill="#f0c2f0"/><rect x="103.2" y="127.0" width="1" height="1" fill="#f0c2f0"/><rect x="81.1" y="108.8" width="1" height="1" fill="#f0c2f0"/><rect x="83.1" y="96.0" width="1" height="1" fill="#f0c2f0"/><rect x="87.3" y="39.4" width="1" height="1" fill="#f0c2f0"/><rect x="90.9" y="91.5" width="1" height="1" fill="#f0c2f0"/><rect x="94.2" y="112.0" width="1" height="1" fill="#f0c2f0"/><rect x="94.7" y="77.9" width="1" height="1" fill="#f0c2f0"/><rect x="89.6" y="65.1" width="1" height="1" fill="#f0c2f0"/><rect x="92.1" y="106.2" width="1" height="1" fill="#f0c2f0"/><rect x="116.7" y="131.5" width="1" height="1" fill="#f0c2f0"/><rect x="84.7" y="131.4" width="1" height="1" fill="#f0c2f0"/><rect x="108.0" y="113.5" width="1" height="1" fill="#f0c2f0"/><rect x="96.4" y="123.8" width="1" height="1" fill="#f0c2f0"/><rect x="94.3" y="92.0" width="1" height="1" fill="#f0c2f0"/><rect x="96.3" y="105.7" width="1" height="1" fill="#f0c2f0"/><rect x="91.0" y="31.6" width="1" height="1" fill="#f0c2f0"/><rect x="102.8" y="115.2" width="1" height="1" fill="#f0c2f0"/><rect x="86.6" y="81.4" width="1" height="1" fill="#f0c2f0"/><rect x="87.2" y="98.4" width="1" height="1" fill="#f0c2f0"/><rect x="105.1" y="82.5" width="1" height="1" fill="#f0c2f0"/><rect x="96.4" y="51.2" width="1" height="1" fill="#f0c2f0"/><rect x="92.6" y="125.5" width="1" height="1" fill="#f0c2f0"/><rect x="80.6" y="95.9" width="1" height="1" fill="#f0c2f0"/><rect x="93.9" y="50.8" width="1" height="1" fill="#f0c2f0"/><rect x="92.4" y="105.1" width="1" height="1" fill="#f0c2f0"/><rect x="87.8" y="98.6" width="1" height="1" fill="#f0c2f0"/><rect x="80.7" y="61.2" width="1" height="1" fill="#f0c2f0"/><rect x="85.9" y="132.8" width="1" height="1" fill="#f0c2f0"/><rect x="83.9" y="79.2" width="1" height="1" fill="#f0c2f0"/><rect x="85.9" y="54.2" width="1" height="1" fill="#f0c2f0"/><rect x="96.5" y="102.2" width="1" height="1" fill="#f0c2f0"/><rect x="90.6" y="89.0" width="1" height="1" fill="#f0c2f0"/><rect x="92.7" y="118.6" width="1" height="1" fill="#f0c2f0"/><rect x="78.5" y="66.8" width="1" height="1" fill="#f0c2f0"/><rect x="93.0" y="97.7" width="1" height="1" fill="#f0c2f0"/><rect x="77.7" y="64.4" width="1" height="1" fill="#f0c2f0"/><rect x="94.7" y="109.1" width="1" height="1" fill="#f0c2f0"/><rect x="101.5" y="81.2" width="1" height="1" fill="#f0c2f0"/><rect x="88.1" y="129.1" width="1" height="1" fill="#f0c2f0"/><rect x="80.2" y="122.9" width="1" height="1" fill="#f0c2f0"/><rect x="82.3" y="73.3" width="1" height="1" fill="#f0c2f0"/><rect x="87.5" y="63.3" width="1" height="1" fill="#f0c2f0"/><rect x="111.7" y="122.7" width="1" height="1" fill="#f0c2f0"/><rect x="92.8" y="43.5" width="1" height="1" fill="#f0c2f0"/><rect x="109.8" y="120.6" width="1" height="1" fill="#f0c2f0"/><rect x="99.5" y="133.2" width="1" height="1" fill="#f0c2f0"/><rect x="88.1" y="48.4" width="1" height="1" fill="#f0c2f0"/><rect x="95.6" y="65.2" width="1" height="1" fill="#f0c2f0"/><rect x="81.5" y="132.2" width="1" height="1" fill="#f0c2f0"/><rect x="81.6" y="124.8" width="1" height="1" fill="#f0c2f0"/><rect x="79.6" y="68.7" width="1" height="1" fill="#f0c2f0"/><rect x="101.1" y="121.0" width="1" height="1" fill="#f0c2f0"/><rect x="100.1" y="133.5" width="1" height="1" fill="#f0c2f0"/><rect x="87.4" y="78.3" width="1" height="1" fill="#f0c2f0"/><rect x="98.7" y="127.3" width="1" height="1" fill="#f0c2f0"/><rect x="86.0" y="84.2" width="1" height="1" fill="#f0c2f0"/><rect x="89.3" y="61.0" width="1" height="1" fill="#f0c2f0"/><rect x="104.4" y="133.2" width="1" height="1" fill="#f0c2f0"/><rect x="93.0" y="77.1" width="1" height="1" fill="#f0c2f0"/><rect x="85.3" y="98.0" width="1" height="1" fill="#f0c2f0"/><rect x="83.2" y="99.9" width="1" height="1" fill="#f0c2f0"/><rect x="91.7" y="73.2" width="1" height="1" fill="#f0c2f0"/><rect x="85.6" y="88.4" width="1" height="1" fill="#f0c2f0"/><rect x="95.2" y="73.3" width="1" height="1" fill="#f0c2f0"/><rect x="87.2" y="86.0" width="1" height="1" fill="#f0c2f0"/><rect x="80.3" y="61.8" width="1" height="1" fill="#f0c2f0"/><rect x="78.5" y="65.4" width="1" height="1" fill="#f0c2f0"/><rect x="102.0" y="105.0" width="1" height="1" fill="#f0c2f0"/><rect x="86.6" y="64.8" width="1" height="1" fill="#f0c2f0"/><rect x="85.6" y="67.4" width="1" height="1" fill="#f0c2f0"/><rect x="86.4" y="131.9" width="1" height="1" fill="#f0c2f0"/><rect x="89.0" y="92.8" width="1" height="1" fill="#f0c2f0"/><rect x="98.9" y="125.4" width="1" height="1" fill="#f0c2f0"/><rect x="89.0" y="64.6" width="1" height="1" fill="#f0c2f0"/><rect x="80.4" y="92.2" width="1" height="1" fill="#f0c2f0"/><rect x="85.6" y="125.8" width="1" height="1" fill="#f0c2f0"/><rect x="100.7" y="124.9" width="1" height="1" fill="#f0c2f0"/><rect x="96.8" y="106.5" width="1" height="1" fill="#f0c2f0"/><rect x="91.3" y="53.4" width="1" height="1" fill="#f0c2f0"/><rect x="90.3" y="31.8" width="1" height="1" fill="#f0c2f0"/><rect x="98.4" y="107.3" width="1" height="1" fill="#f0c2f0"/><rect x="80.0" y="112.2" width="1" height="1" fill="#f0c2f0"/><rect x="82.9" y="132.0" width="1" height="1" fill="#f0c2f0"/><rect x="95.3" y="120.1" width="1" height="1" fill="#f0c2f0"/><rect x="88.0" y="51.6" width="1" height="1" fill="#f0c2f0"/><rect x="83.7" y="52.5" width="1" height="1" fill="#f0c2f0"/><rect x="93.2" y="134.7" width="1" height="1" fill="#f0c2f0"/><rect x="98.2" y="63.4" width="1" height="1" fill="#f0c2f0"/><rect x="93.9" y="133.2" width="1" height="1" fill="#f0c2f0"/><rect x="101.5" y="129.8" width="1" height="1" fill="#f0c2f0"/><rect x="79.6" y="130.9" width="1" height="1" fill="#f0c2f0"/><rect x="80.0" y="66.5" width="1" height="1" fill="#f0c2f0"/><rect x="100.6" y="129.0" width="1" height="1" fill="#f0c2f0"/><rect x="109.4" y="134.1" width="1" height="1" fill="#f0c2f0"/><rect x="100.3" y="75.7" width="1" height="1" fill="#f0c2f0"/><rect x="85.7" y="120.4" width="1" height="1" fill="#f0c2f0"/><rect x="86.1" y="58.9" width="1" height="1" fill="#f0c2f0"/><rect x="81.2" y="127.1" width="1" height="1" fill="#f0c2f0"/><rect x="89.9" y="106.7" width="1" height="1" fill="#f0c2f0"/><rect x="82.4" y="134.2" width="1" height="1" fill="#f0c2f0"/><rect x="95.7" y="32.5" width="1" height="1" fill="#f0c2f0"/><rect x="88.2" y="44.9" width="1" height="1" fill="#f0c2f0"/><rect x="99.6" y="115.1" width="1" height="1" fill="#f0c2f0"/><rect x="104.3" y="88.5" width="1" height="1" fill="#f0c2f0"/><rect x="93.0" y="78.2" width="1" height="1" fill="#f0c2f0"/><rect x="105.7" y="117.4" width="1" height="1" fill="#f0c2f0"/><rect x="87.4" y="104.4" width="1" height="1" fill="#f0c2f0"/><rect x="87.6" y="42.8" width="1" height="1" fill="#f0c2f0"/><rect x="86.5" y="58.0" width="1" height="1" fill="#f0c2f0"/><rect x="86.8" y="95.0" width="1" height="1" fill="#f0c2f0"/><rect x="81.8" y="59.7" width="1" height="1" fill="#f0c2f0"/><polyline points="32.5,14.0 32.5,135.0 154.7,135.0" fill="none" stroke="#cdcdcd" stroke-width="1"/></svg>
<div style="position:absolute;left:1659px;top:305px;width:46px;height:10px;transform:rotate(-90deg);font:bold 7px Liberation Sans;color:#d5d5d5;letter-spacing:0.9px;line-height:10px;text-align:center;white-space:nowrap">TRUST FLOW</div>
<div style="position:absolute;left:250px;top:440px;width:537px;height:197px;background:#fff;box-shadow:0 1px 7px rgba(0,0,0,0.075);border-radius:2px"></div>
<div style="position:absolute;left:807px;top:440px;width:536px;height:197px;background:#fff;box-shadow:0 1px 7px rgba(0,0,0,0.075);border-radius:2px"></div>
<div style="position:absolute;left:1363px;top:440px;width:259px;height:197px;background:#fff;box-shadow:0 1px 7px rgba(0,0,0,0.075);border-radius:2px"></div>
<div style="position:absolute;left:1642px;top:440px;width:258px;height:197px;background:#fff;box-shadow:0 1px 7px rgba(0,0,0,0.075);border-radius:2px"></div>
<div style="position:absolute;left:263px;top:587px;width:511px;height:1px;background:#dcdcdc;"></div>
<div style="position:absolute;left:819px;top:587px;width:512px;height:1px;background:#dcdcdc;"></div>
<div style="position:absolute;left:1376px;top:586px;width:233px;height:1px;background:#dcdcdc;"></div>
<div style="position:absolute;left:1654px;top:586px;width:233px;height:1px;background:#dcdcdc;"></div>
<div style="position:absolute;left:250px;top:657px;width:258px;height:121px;background:#f4f5f7;box-shadow:0 1px 7px rgba(0,0,0,0.075);border-radius:2px"></div>
<div style="position:absolute;left:528px;top:657px;width:259px;height:121px;background:#f4f5f7;box-shadow:0 1px 7px rgba(0,0,0,0.075);border-radius:2px"></div>
<div style="position:absolute;left:807px;top:657px;width:536px;height:121px;background:#f4f5f7;box-shadow:0 1px 7px rgba(0,0,0,0.075);border-radius:2px"></div>
<div style="position:absolute;left:1363px;top:657px;width:259px;height:121px;background:#f4f5f7;box-shadow:0 1px 7px rgba(0,0,0,0.075);border-radius:2px"></div>
<div style="position:absolute;left:1642px;top:657px;width:258px;height:121px;background:#f4f5f7;box-shadow:0 1px 7px rgba(0,0,0,0.075);border-radius:2px"></div>
<div style="position:absolute;left:1073px;top:685.9px;width:13px;height:11.6px;border-radius:50%;background:#4a7fc1;color:#fff;font:bold 9.5px Liberation Sans;line-height:11.6px;text-align:center;-webkit-text-stroke:0.5px #fff">?</div>
<div style="position:absolute;left:250px;top:818px;width:1650px;height:1px;background:#dddddd;"></div>
<div style="position:absolute;left:1250px;top:857px;width:1px;height:80px;background:#dddddd;"></div>
<div style="position:absolute;left:675px;top:923px;width:153px;height:20px;background:#4a7fbd;border-radius:3px"></div>
<div style="position:absolute;left:1495px;top:923px;width:161px;height:20px;background:#4a7fbd;border-radius:3px"></div>
<div style="position:absolute;left:457.7px;top:91px;width:102.3px;height:1px;background:#2f4655;"></div>
<div style="position:absolute;left:646px;top:91px;width:44.7px;height:1px;background:#2f4655;"></div>
<div style="position:absolute;left:20.33px;top:32.60px;font:400 18.6px 'Liberation Sans';line-height:18.6px;letter-spacing:0.000px;color:#ffffff;white-space:nowrap;transform:scaleX(0.8662);transform-origin:0 0;-webkit-text-stroke:0.6px #fff;">MAJESTIC</div>
<div style="position:absolute;left:102.80px;top:40.60px;font:700 8.48px 'Liberation Sans';line-height:8.48px;letter-spacing:0.634px;color:#8096ab;white-space:nowrap;transform:scaleX(0.9500);transform-origin:0 0;">BETA</div>
<div style="position:absolute;left:260.00px;top:24.00px;font:400 13.39px 'Liberation Sans';line-height:13.39px;letter-spacing:0.000px;color:#333;white-space:nowrap;transform:scaleX(1.1392);transform-origin:0 0;">https://tupacbruch.com/</div>
<div style="position:absolute;left:722.49px;top:23.80px;font:400 13.14px 'Liberation Sans';line-height:13.14px;letter-spacing:0.000px;color:#333;white-space:nowrap;transform:scaleX(0.9056);transform-origin:0 0;">URL</div>
<div style="position:absolute;left:947.73px;top:23.80px;font:400 13.14px 'Liberation Sans';line-height:13.14px;letter-spacing:0.000px;color:#333;white-space:nowrap;transform:scaleX(0.8697);transform-origin:0 0;">FRESH</div>
<div style="position:absolute;left:1037.50px;top:23.80px;font:400 13.0px 'Liberation Serif';line-height:13.0px;letter-spacing:0.000px;color:#d3d9df;white-space:nowrap;transform:scaleX(0.9908);transform-origin:0 0;-webkit-text-stroke:0.4px #d3d9df;">HISTORIC</div>
<div style="position:absolute;left:1485.60px;top:23.70px;font:400 13.39px 'Liberation Sans';line-height:13.39px;letter-spacing:0.000px;color:#ffffff;white-space:nowrap;transform:scaleX(1.0100);transform-origin:0 0;">Suscríbase GRATIS</div>
<div style="position:absolute;left:1633.45px;top:23.20px;font:400 13.39px 'Liberation Sans';line-height:13.39px;letter-spacing:0.000px;color:#f3c33c;white-space:nowrap;transform:scaleX(1.0519);transform-origin:0 0;">Planes y precios</div>
<div style="position:absolute;left:1756.91px;top:23.20px;font:400 13.39px 'Liberation Sans';line-height:13.39px;letter-spacing:0.000px;color:#ffffff;white-space:nowrap;transform:scaleX(1.0924);transform-origin:0 0;">Iniciar sesión</div>
<div style="position:absolute;left:20.40px;top:94.10px;font:700 13.78px 'Liberation Sans';line-height:13.78px;letter-spacing:0.510px;color:#222;white-space:nowrap;transform:scaleX(0.9500);transform-origin:0 0;">EMPEZAR</div>
<div style="position:absolute;left:19.30px;top:125.00px;font:400 13.39px 'Liberation Sans';line-height:13.39px;letter-spacing:0.000px;color:#333;white-space:nowrap;transform:scaleX(1.0951);transform-origin:0 0;">Iniciar sesión</div>
<div style="position:absolute;left:19.36px;top:154.90px;font:400 13.39px 'Liberation Sans';line-height:13.39px;letter-spacing:0.000px;color:#333;white-space:nowrap;transform:scaleX(1.0427);transform-origin:0 0;">Planes y precios</div>
<div style="position:absolute;left:27.30px;top:185.70px;font:400 13.39px 'Liberation Sans';line-height:13.39px;letter-spacing:0.000px;color:#ffffff;white-space:nowrap;transform:scaleX(1.0100);transform-origin:0 0;">Suscríbase GRATIS</div>
<div style="position:absolute;left:20.30px;top:243.20px;font:700 13.78px 'Liberation Sans';line-height:13.78px;letter-spacing:0.909px;color:#222;white-space:nowrap;transform:scaleX(0.9500);transform-origin:0 0;">HERRAMIENTAS</div>
<div style="position:absolute;left:20.40px;top:273.80px;font:400 13.39px 'Liberation Sans';line-height:13.39px;letter-spacing:0.000px;color:#333;white-space:nowrap;transform:scaleX(1.0605);transform-origin:0 0;">Site Explorer</div>
<div style="position:absolute;left:29.87px;top:304.14px;font:400 13.39px 'Liberation Sans';line-height:13.39px;letter-spacing:0.000px;color:#36506b;white-space:nowrap;transform:scaleX(1.0330);transform-origin:0 0;">Resumen</div>
<div style="position:absolute;left:29.84px;top:334.47px;font:400 13.39px 'Liberation Sans';line-height:13.39px;letter-spacing:0.000px;color:#36506b;white-space:nowrap;transform:scaleX(1.0581);transform-origin:0 0;">Dominios ref.</div>
<div style="position:absolute;left:55.41px;top:364.81px;font:400 13.39px 'Liberation Sans';line-height:13.39px;letter-spacing:0.000px;color:#36506b;white-space:nowrap;transform:scaleX(0.9873);transform-origin:0 0;">Mapa</div>
<div style="position:absolute;left:29.84px;top:395.15px;font:400 13.39px 'Liberation Sans';line-height:13.39px;letter-spacing:0.000px;color:#36506b;white-space:nowrap;transform:scaleX(1.0580);transform-origin:0 0;">Backlinks</div>
<div style="position:absolute;left:55.36px;top:425.49px;font:400 13.39px 'Liberation Sans';line-height:13.39px;letter-spacing:0.000px;color:#36506b;white-space:nowrap;transform:scaleX(1.0393);transform-origin:0 0;">Nuevos</div>
<div style="position:absolute;left:55.38px;top:455.82px;font:400 13.39px 'Liberation Sans';line-height:13.39px;letter-spacing:0.000px;color:#36506b;white-space:nowrap;transform:scaleX(1.0210);transform-origin:0 0;">Perdidos</div>
<div style="position:absolute;left:30.90px;top:486.16px;font:400 13.39px 'Liberation Sans';line-height:13.39px;letter-spacing:0.000px;color:#36506b;white-space:nowrap;transform:scaleX(1.0821);transform-origin:0 0;">Contexto</div>
<div style="position:absolute;left:30.90px;top:516.50px;font:400 13.39px 'Liberation Sans';line-height:13.39px;letter-spacing:0.000px;color:#36506b;white-space:nowrap;transform:scaleX(1.0482);transform-origin:0 0;">Texto ancla</div>
<div style="position:absolute;left:29.89px;top:546.83px;font:400 13.39px 'Liberation Sans';line-height:13.39px;letter-spacing:0.000px;color:#36506b;white-space:nowrap;transform:scaleX(1.0086);transform-origin:0 0;">Páginas</div>
<div style="position:absolute;left:30.90px;top:577.17px;font:400 13.39px 'Liberation Sans';line-height:13.39px;letter-spacing:0.000px;color:#36506b;white-space:nowrap;transform:scaleX(1.0402);transform-origin:0 0;">Temas</div>
<div style="position:absolute;left:29.84px;top:607.51px;font:400 13.39px 'Liberation Sans';line-height:13.39px;letter-spacing:0.000px;color:#36506b;white-space:nowrap;transform:scaleX(1.0574);transform-origin:0 0;">Link Graph</div>
<div style="position:absolute;left:29.85px;top:637.84px;font:400 13.39px 'Liberation Sans';line-height:13.39px;letter-spacing:0.000px;color:#36506b;white-space:nowrap;transform:scaleX(1.0465);transform-origin:0 0;">Related Sites (Sitios Web</div>
<div style="position:absolute;left:29.87px;top:668.18px;font:400 13.39px 'Liberation Sans';line-height:13.39px;letter-spacing:0.000px;color:#36506b;white-space:nowrap;transform:scaleX(1.0316);transform-origin:0 0;">Relacionados)</div>
<div style="position:absolute;left:29.84px;top:698.52px;font:400 13.39px 'Liberation Sans';line-height:13.39px;letter-spacing:0.000px;color:#36506b;white-space:nowrap;transform:scaleX(1.0643);transform-origin:0 0;">Herramientas avanzadas</div>
<div style="position:absolute;left:20.40px;top:728.86px;font:400 13.39px 'Liberation Sans';line-height:13.39px;letter-spacing:0.000px;color:#333;white-space:nowrap;transform:scaleX(1.0597);transform-origin:0 0;">Comparar</div>
<div style="position:absolute;left:19.34px;top:759.19px;font:400 13.39px 'Liberation Sans';line-height:13.39px;letter-spacing:0.000px;color:#333;white-space:nowrap;transform:scaleX(1.0598);transform-origin:0 0;">Bulk Backlinks</div>
<div style="position:absolute;left:19.35px;top:789.53px;font:400 13.39px 'Liberation Sans';line-height:13.39px;letter-spacing:0.000px;color:#333;white-space:nowrap;transform:scaleX(1.0473);transform-origin:0 0;">Palabras clave</div>
<div style="position:absolute;left:19.34px;top:819.87px;font:400 13.39px 'Liberation Sans';line-height:13.39px;letter-spacing:0.000px;color:#333;white-space:nowrap;transform:scaleX(1.0553);transform-origin:0 0;">Neighbourhood Checker</div>
<div style="position:absolute;left:19.32px;top:850.20px;font:400 13.39px 'Liberation Sans';line-height:13.39px;letter-spacing:0.000px;color:#333;white-space:nowrap;transform:scaleX(1.0761);transform-origin:0 0;">Experimental</div>
<div style="position:absolute;left:19.35px;top:880.54px;font:400 13.39px 'Liberation Sans';line-height:13.39px;letter-spacing:0.000px;color:#333;white-space:nowrap;transform:scaleX(1.0480);transform-origin:0 0;">Enviar direcciones URL</div>
<div style="position:absolute;left:20.40px;top:910.88px;font:400 13.39px 'Liberation Sans';line-height:13.39px;letter-spacing:0.000px;color:#333;white-space:nowrap;transform:scaleX(1.0463);transform-origin:0 0;">Custom Reports</div>
<div style="position:absolute;left:249.80px;top:134.80px;font:400 25px 'Liberation Sans';line-height:25px;letter-spacing:1.150px;color:#1b941b;white-space:nowrap;">https://tupacbruch.com/</div>
<div style="position:absolute;left:1808.10px;top:141.80px;font:400 13.78px 'Liberation Sans';line-height:13.78px;letter-spacing:1.184px;color:#333;white-space:nowrap;transform:scaleX(0.9500);transform-origin:0 0;">ACTIONS</div>
<div style="position:absolute;left:276.50px;top:198.50px;font:400 13.78px 'Liberation Sans';line-height:13.78px;letter-spacing:-0.152px;color:#333;white-space:nowrap;transform:scaleX(0.9500);transform-origin:0 0;">TRUST FLOW</div>
<div style="position:absolute;left:576.00px;top:198.50px;font:400 13.78px 'Liberation Sans';line-height:13.78px;letter-spacing:-0.028px;color:#333;white-space:nowrap;transform:scaleX(0.9500);transform-origin:0 0;">TOPICAL TRUST FLOW</div>
<div style="position:absolute;left:1104.40px;top:198.20px;font:400 13.78px 'Liberation Sans';line-height:13.78px;letter-spacing:0.246px;color:#333;white-space:nowrap;transform:scaleX(0.9500);transform-origin:0 0;">CITATION FLOW</div>
<div style="position:absolute;left:1390.85px;top:198.20px;font:400 13.78px 'Liberation Sans';line-height:13.78px;letter-spacing:0.203px;color:#333;white-space:nowrap;transform:scaleX(0.9500);transform-origin:0 0;">LINK GRAPH</div>
<div style="position:absolute;left:1517.91px;top:198.30px;font:400 11.33px 'Liberation Sans';line-height:11.33px;letter-spacing:0.000px;color:#8a8a8a;white-space:nowrap;transform:scaleX(1.0922);transform-origin:0 0;">... más</div>
<div style="position:absolute;left:1660.75px;top:198.20px;font:400 13.78px 'Liberation Sans';line-height:13.78px;letter-spacing:0.149px;color:#333;white-space:nowrap;transform:scaleX(0.9500);transform-origin:0 0;">LINK PROFILE</div>
<div style="position:absolute;left:1792.91px;top:198.30px;font:400 11.33px 'Liberation Sans';line-height:11.33px;letter-spacing:0.000px;color:#8a8a8a;white-space:nowrap;transform:scaleX(1.0922);transform-origin:0 0;">... más</div>
<div style="position:absolute;left:355.36px;top:296.80px;font:400 38px 'Liberation Sans';line-height:38px;letter-spacing:0.000px;color:#000;white-space:nowrap;transform:scaleX(0.9421);transform-origin:0 0;">8</div>
<div style="position:absolute;left:1168.10px;top:297.00px;font:400 38px 'Liberation Sans';line-height:38px;letter-spacing:0.066px;color:#000;white-space:nowrap;">25</div>
<div style="position:absolute;left:583.90px;top:250.70px;font:400 13.39px 'Liberation Sans';line-height:13.39px;letter-spacing:0.000px;color:#d0d0d2;white-space:nowrap;transform:scaleX(1.0266);transform-origin:0 0;">Arts / Television</div>
<div style="position:absolute;left:582.89px;top:287.50px;font:400 13.39px 'Liberation Sans';line-height:13.39px;letter-spacing:0.000px;color:#d0d0d2;white-space:nowrap;transform:scaleX(1.0079);transform-origin:0 0;">Recreation / Radio</div>
<div style="position:absolute;left:583.90px;top:324.30px;font:400 13.39px 'Liberation Sans';line-height:13.39px;letter-spacing:0.000px;color:#d0d0d2;white-space:nowrap;transform:scaleX(0.9814);transform-origin:0 0;">Science / Social Sciences</div>
<div style="position:absolute;left:583.90px;top:361.10px;font:400 13.39px 'Liberation Sans';line-height:13.39px;letter-spacing:0.000px;color:#d0d0d2;white-space:nowrap;transform:scaleX(1.0477);transform-origin:0 0;">Computers / Software / Internet</div>
<div style="position:absolute;left:678.48px;top:308.20px;font:400 16.48px 'Liberation Sans';line-height:16.48px;letter-spacing:0.000px;color:#333;white-space:nowrap;transform:scaleX(1.1246);transform-origin:0 0;">Disponible para suscriptores</div>
<div style="position:absolute;left:1400.79px;top:288.00px;font:400 16.48px 'Liberation Sans';line-height:16.48px;letter-spacing:0.000px;color:#333;white-space:nowrap;transform:scaleX(1.1122);transform-origin:0 0;">Disponible para</div>
<div style="position:absolute;left:1416.00px;top:320.50px;font:400 16.48px 'Liberation Sans';line-height:16.48px;letter-spacing:0.000px;color:#333;white-space:nowrap;transform:scaleX(1.1181);transform-origin:0 0;">suscriptores</div>
<div style="position:absolute;left:1668.00px;top:246.00px;font:700 7.1px 'Liberation Sans';line-height:7.1px;letter-spacing:1.055px;color:#cfcfcf;white-space:nowrap;">100</div>
<div style="position:absolute;left:1714.00px;top:371.50px;font:700 7.42px 'Liberation Sans';line-height:7.42px;letter-spacing:0.452px;color:#d5d5d5;white-space:nowrap;transform:scaleX(0.9500);transform-origin:0 0;">CITATION FLOW</div>
<div style="position:absolute;left:1793.00px;top:372.50px;font:700 7.1px 'Liberation Sans';line-height:7.1px;letter-spacing:1.055px;color:#cfcfcf;white-space:nowrap;">100</div>
<div style="position:absolute;left:1661.70px;top:384.00px;font:700 6.36px 'Liberation Sans';line-height:6.36px;letter-spacing:-0.396px;color:#c9b5a8;white-space:nowrap;transform:scaleX(0.9500);transform-origin:0 0;">MAJESTIC</div>
<div style="position:absolute;left:1675.79px;top:288.00px;font:400 16.48px 'Liberation Sans';line-height:16.48px;letter-spacing:0.000px;color:#333;white-space:nowrap;transform:scaleX(1.1140);transform-origin:0 0;">Disponible para</div>
<div style="position:absolute;left:1691.00px;top:320.50px;font:400 16.48px 'Liberation Sans';line-height:16.48px;letter-spacing:0.000px;color:#333;white-space:nowrap;transform:scaleX(1.1181);transform-origin:0 0;">suscriptores</div>
<div style="position:absolute;left:262.45px;top:454.90px;font:400 13.78px 'Liberation Sans';line-height:13.78px;letter-spacing:0.933px;color:#2b3440;white-space:nowrap;transform:scaleX(0.9500);transform-origin:0 0;">ENLACES ENTRANTES EXTERNOS</div>
<div style="position:absolute;left:292.00px;top:496.20px;font:400 13.39px 'Liberation Sans';line-height:13.39px;letter-spacing:0.000px;color:#999;white-space:nowrap;transform:scaleX(1.0682);transform-origin:0 0;">Cambiar a búsquedas de dominio de Fresh Index para ver las líneas de</div>
<div style="position:absolute;left:488.20px;top:511.60px;font:400 13.39px 'Liberation Sans';line-height:13.39px;letter-spacing:0.000px;color:#999;white-space:nowrap;transform:scaleX(1.0330);transform-origin:0 0;">tendencia</div>
<div style="position:absolute;left:340.85px;top:557.20px;font:400 13.78px 'Liberation Sans';line-height:13.78px;letter-spacing:0.795px;color:#1f8c1f;white-space:nowrap;transform:scaleX(0.9500);transform-origin:0 0;">FRESH</div>
<div style="position:absolute;left:584.19px;top:555.00px;font:700 19.79px 'Liberation Sans';line-height:19.79px;letter-spacing:0.000px;color:#222;white-space:nowrap;transform:scaleX(1.2050);transform-origin:0 0;">12.502</div>
<div style="position:absolute;left:328.55px;top:607.00px;font:400 13.78px 'Liberation Sans';line-height:13.78px;letter-spacing:1.376px;color:#a040b8;white-space:nowrap;transform:scaleX(0.9500);transform-origin:0 0;">HISTORIC</div>
<div style="position:absolute;left:584.40px;top:604.00px;font:400 19.28px 'Liberation Sans';line-height:19.28px;letter-spacing:2.458px;color:#222;white-space:nowrap;">12.541</div>
<div style="position:absolute;left:818.85px;top:455.00px;font:400 13.78px 'Liberation Sans';line-height:13.78px;letter-spacing:1.195px;color:#2b3440;white-space:nowrap;transform:scaleX(0.9500);transform-origin:0 0;">DOMINIOS DE REFERENCIA</div>
<div style="position:absolute;left:848.70px;top:496.20px;font:400 13.39px 'Liberation Sans';line-height:13.39px;letter-spacing:0.000px;color:#999;white-space:nowrap;transform:scaleX(1.0667);transform-origin:0 0;">Cambiar a búsquedas de dominio de Fresh Index para ver las líneas de</div>
<div style="position:absolute;left:1044.40px;top:511.60px;font:400 13.39px 'Liberation Sans';line-height:13.39px;letter-spacing:0.000px;color:#999;white-space:nowrap;transform:scaleX(1.0415);transform-origin:0 0;">tendencia</div>
<div style="position:absolute;left:897.35px;top:557.20px;font:400 13.78px 'Liberation Sans';line-height:13.78px;letter-spacing:0.953px;color:#1f8c1f;white-space:nowrap;transform:scaleX(0.9500);transform-origin:0 0;">FRESH</div>
<div style="position:absolute;left:1164.33px;top:555.00px;font:700 19.79px 'Liberation Sans';line-height:19.79px;letter-spacing:0.000px;color:#222;white-space:nowrap;transform:scaleX(1.1666);transform-origin:0 0;">18</div>
<div style="position:absolute;left:885.05px;top:607.00px;font:400 13.78px 'Liberation Sans';line-height:13.78px;letter-spacing:1.451px;color:#a040b8;white-space:nowrap;transform:scaleX(0.9500);transform-origin:0 0;">HISTORIC</div>
<div style="position:absolute;left:1165.50px;top:604.00px;font:400 19.28px 'Liberation Sans';line-height:19.28px;letter-spacing:2.585px;color:#222;white-space:nowrap;">20</div>
<div style="position:absolute;left:1375.35px;top:454.90px;font:400 13.78px 'Liberation Sans';line-height:13.78px;letter-spacing:1.177px;color:#2b3440;white-space:nowrap;transform:scaleX(0.9500);transform-origin:0 0;">IP REF.</div>
<div style="position:absolute;left:1398.45px;top:556.30px;font:400 13.78px 'Liberation Sans';line-height:13.78px;letter-spacing:0.848px;color:#1f8c1f;white-space:nowrap;transform:scaleX(0.9500);transform-origin:0 0;">FRESH</div>
<div style="position:absolute;left:1494.40px;top:558.00px;font:400 15.45px 'Liberation Sans';line-height:15.45px;letter-spacing:0.862px;color:#999;white-space:nowrap;transform:scaleX(1.0500);transform-origin:0 0;">Suscribirse</div>
<div style="position:absolute;left:1386.05px;top:606.00px;font:400 13.78px 'Liberation Sans';line-height:13.78px;letter-spacing:1.466px;color:#a040b8;white-space:nowrap;transform:scaleX(0.9500);transform-origin:0 0;">HISTORIC</div>
<div style="position:absolute;left:1494.40px;top:608.00px;font:400 15.45px 'Liberation Sans';line-height:15.45px;letter-spacing:0.862px;color:#999;white-space:nowrap;transform:scaleX(1.0500);transform-origin:0 0;">Suscribirse</div>
<div style="position:absolute;left:1654.90px;top:454.90px;font:400 13.78px 'Liberation Sans';line-height:13.78px;letter-spacing:0.942px;color:#2b3440;white-space:nowrap;transform:scaleX(0.9500);transform-origin:0 0;">SUBNETS REF.</div>
<div style="position:absolute;left:1676.55px;top:556.30px;font:400 13.78px 'Liberation Sans';line-height:13.78px;letter-spacing:0.927px;color:#1f8c1f;white-space:nowrap;transform:scaleX(0.9500);transform-origin:0 0;">FRESH</div>
<div style="position:absolute;left:1772.50px;top:558.00px;font:400 15.45px 'Liberation Sans';line-height:15.45px;letter-spacing:0.909px;color:#999;white-space:nowrap;transform:scaleX(1.0500);transform-origin:0 0;">Suscribirse</div>
<div style="position:absolute;left:1664.35px;top:606.00px;font:400 13.78px 'Liberation Sans';line-height:13.78px;letter-spacing:1.496px;color:#a040b8;white-space:nowrap;transform:scaleX(0.9500);transform-origin:0 0;">HISTORIC</div>
<div style="position:absolute;left:1772.50px;top:608.00px;font:400 15.45px 'Liberation Sans';line-height:15.45px;letter-spacing:0.909px;color:#999;white-space:nowrap;transform:scaleX(1.0500);transform-origin:0 0;">Suscribirse</div>
<div style="position:absolute;left:347.30px;top:674.10px;font:400 13.78px 'Liberation Sans';line-height:13.78px;letter-spacing:1.047px;color:#1f961f;white-space:nowrap;transform:scaleX(0.9500);transform-origin:0 0;">ACTIVOS</div>
<div style="position:absolute;left:345.60px;top:711.00px;font:400 20.3px 'Liberation Sans';line-height:20.3px;letter-spacing:0.929px;color:#222;white-space:nowrap;">12.467</div>
<div style="position:absolute;left:291.42px;top:745.80px;font:400 13.39px 'Liberation Sans';line-height:13.39px;letter-spacing:0.000px;color:#333;white-space:nowrap;transform:scaleX(1.0756);transform-origin:0 0;">Enlaces entrantes externos</div>
<div style="position:absolute;left:624.65px;top:674.10px;font:400 13.78px 'Liberation Sans';line-height:13.78px;letter-spacing:0.733px;color:#c8283c;white-space:nowrap;transform:scaleX(0.9500);transform-origin:0 0;">DELETED</div>
<div style="position:absolute;left:646.30px;top:711.00px;font:400 20.3px 'Liberation Sans';line-height:20.3px;letter-spacing:0.221px;color:#222;white-space:nowrap;">35</div>
<div style="position:absolute;left:569.42px;top:745.80px;font:400 13.39px 'Liberation Sans';line-height:13.39px;letter-spacing:0.000px;color:#333;white-space:nowrap;transform:scaleX(1.0787);transform-origin:0 0;">Enlaces entrantes externos</div>
<div style="position:absolute;left:831.45px;top:670.90px;font:400 13.78px 'Liberation Sans';line-height:13.78px;letter-spacing:1.051px;color:#2c3e50;white-space:nowrap;transform:scaleX(0.9500);transform-origin:0 0;">DESPUÉS DE LA REDUCCIÓN DE RUIDO</div>
<div style="position:absolute;left:865.20px;top:687.00px;font:400 13.78px 'Liberation Sans';line-height:13.78px;letter-spacing:1.186px;color:#2c3e50;white-space:nowrap;transform:scaleX(0.9500);transform-origin:0 0;">(AFTER NOISE REDUCTION)</div>
<div style="position:absolute;left:920.00px;top:716.00px;font:400 20.3px 'Liberation Sans';line-height:20.3px;letter-spacing:0.849px;color:#222;white-space:nowrap;">10.624</div>
<div style="position:absolute;left:993.60px;top:724.00px;font:400 11.16px 'Liberation Sans';line-height:11.16px;letter-spacing:0.588px;color:#e8302a;white-space:nowrap;">(-15%)</div>
<div style="position:absolute;left:888.54px;top:751.50px;font:400 13.39px 'Liberation Sans';line-height:13.39px;letter-spacing:0.000px;color:#333;white-space:nowrap;transform:scaleX(1.0632);transform-origin:0 0;">Enlaces entrantes externos</div>
<div style="position:absolute;left:1455.35px;top:674.10px;font:400 13.78px 'Liberation Sans';line-height:13.78px;letter-spacing:1.427px;color:#1f961f;white-space:nowrap;transform:scaleX(0.9500);transform-origin:0 0;">DEFINIDO</div>
<div style="position:absolute;left:1474.30px;top:711.00px;font:400 20.3px 'Liberation Sans';line-height:20.3px;letter-spacing:1.221px;color:#222;white-space:nowrap;">109</div>
<div style="position:absolute;left:1404.72px;top:745.80px;font:400 13.39px 'Liberation Sans';line-height:13.39px;letter-spacing:0.000px;color:#333;white-space:nowrap;transform:scaleX(1.0763);transform-origin:0 0;">Enlaces entrantes externos</div>
<div style="position:absolute;left:1727.75px;top:674.10px;font:400 13.78px 'Liberation Sans';line-height:13.78px;letter-spacing:1.010px;color:#f7894a;white-space:nowrap;transform:scaleX(0.9500);transform-origin:0 0;">DUPLICADO</div>
<div style="position:absolute;left:1737.80px;top:711.00px;font:400 20.3px 'Liberation Sans';line-height:20.3px;letter-spacing:0.849px;color:#222;white-space:nowrap;">12.393</div>
<div style="position:absolute;left:1683.23px;top:745.80px;font:400 13.39px 'Liberation Sans';line-height:13.39px;letter-spacing:0.000px;color:#333;white-space:nowrap;transform:scaleX(1.0738);transform-origin:0 0;">Enlaces entrantes externos</div>
<div style="position:absolute;left:418.22px;top:868.90px;font:400 13.39px 'Liberation Sans';line-height:13.39px;letter-spacing:0.000px;color:#333;white-space:nowrap;transform:scaleX(1.0763);transform-origin:0 0;">Los suscriptores obtienen valores de dominios de referencia, IP y Subnet para todos los sitios web, y los</div>
<div style="position:absolute;left:539.60px;top:893.70px;font:400 13.39px 'Liberation Sans';line-height:13.39px;letter-spacing:0.000px;color:#333;white-space:nowrap;transform:scaleX(1.0834);transform-origin:0 0;">suscriptores a partir de la categoría Pro obtienen el Historic Index.</div>
<div style="position:absolute;left:1345.71px;top:868.80px;font:400 13.39px 'Liberation Sans';line-height:13.39px;letter-spacing:0.000px;color:#333;white-space:nowrap;transform:scaleX(1.0857);transform-origin:0 0;">Feeling lost? Click here to find out more about how Site Explorer works,</div>
<div style="position:absolute;left:1453.50px;top:893.70px;font:400 13.39px 'Liberation Sans';line-height:13.39px;letter-spacing:0.000px;color:#333;white-space:nowrap;transform:scaleX(1.0793);transform-origin:0 0;">and see a breakdown of all of the tabs</div>
<div style="position:absolute;left:250.30px;top:77.60px;font:400 13.39px 'Liberation Sans';line-height:13.39px;letter-spacing:0.000px;color:#333;white-space:nowrap;transform:scaleX(1.0730);transform-origin:0 0;">¿Le gustaría cambiar el dominio tupacbruch.com entero? Hay 13.233 enlaces entrantes externos.</div>
</body></html>
